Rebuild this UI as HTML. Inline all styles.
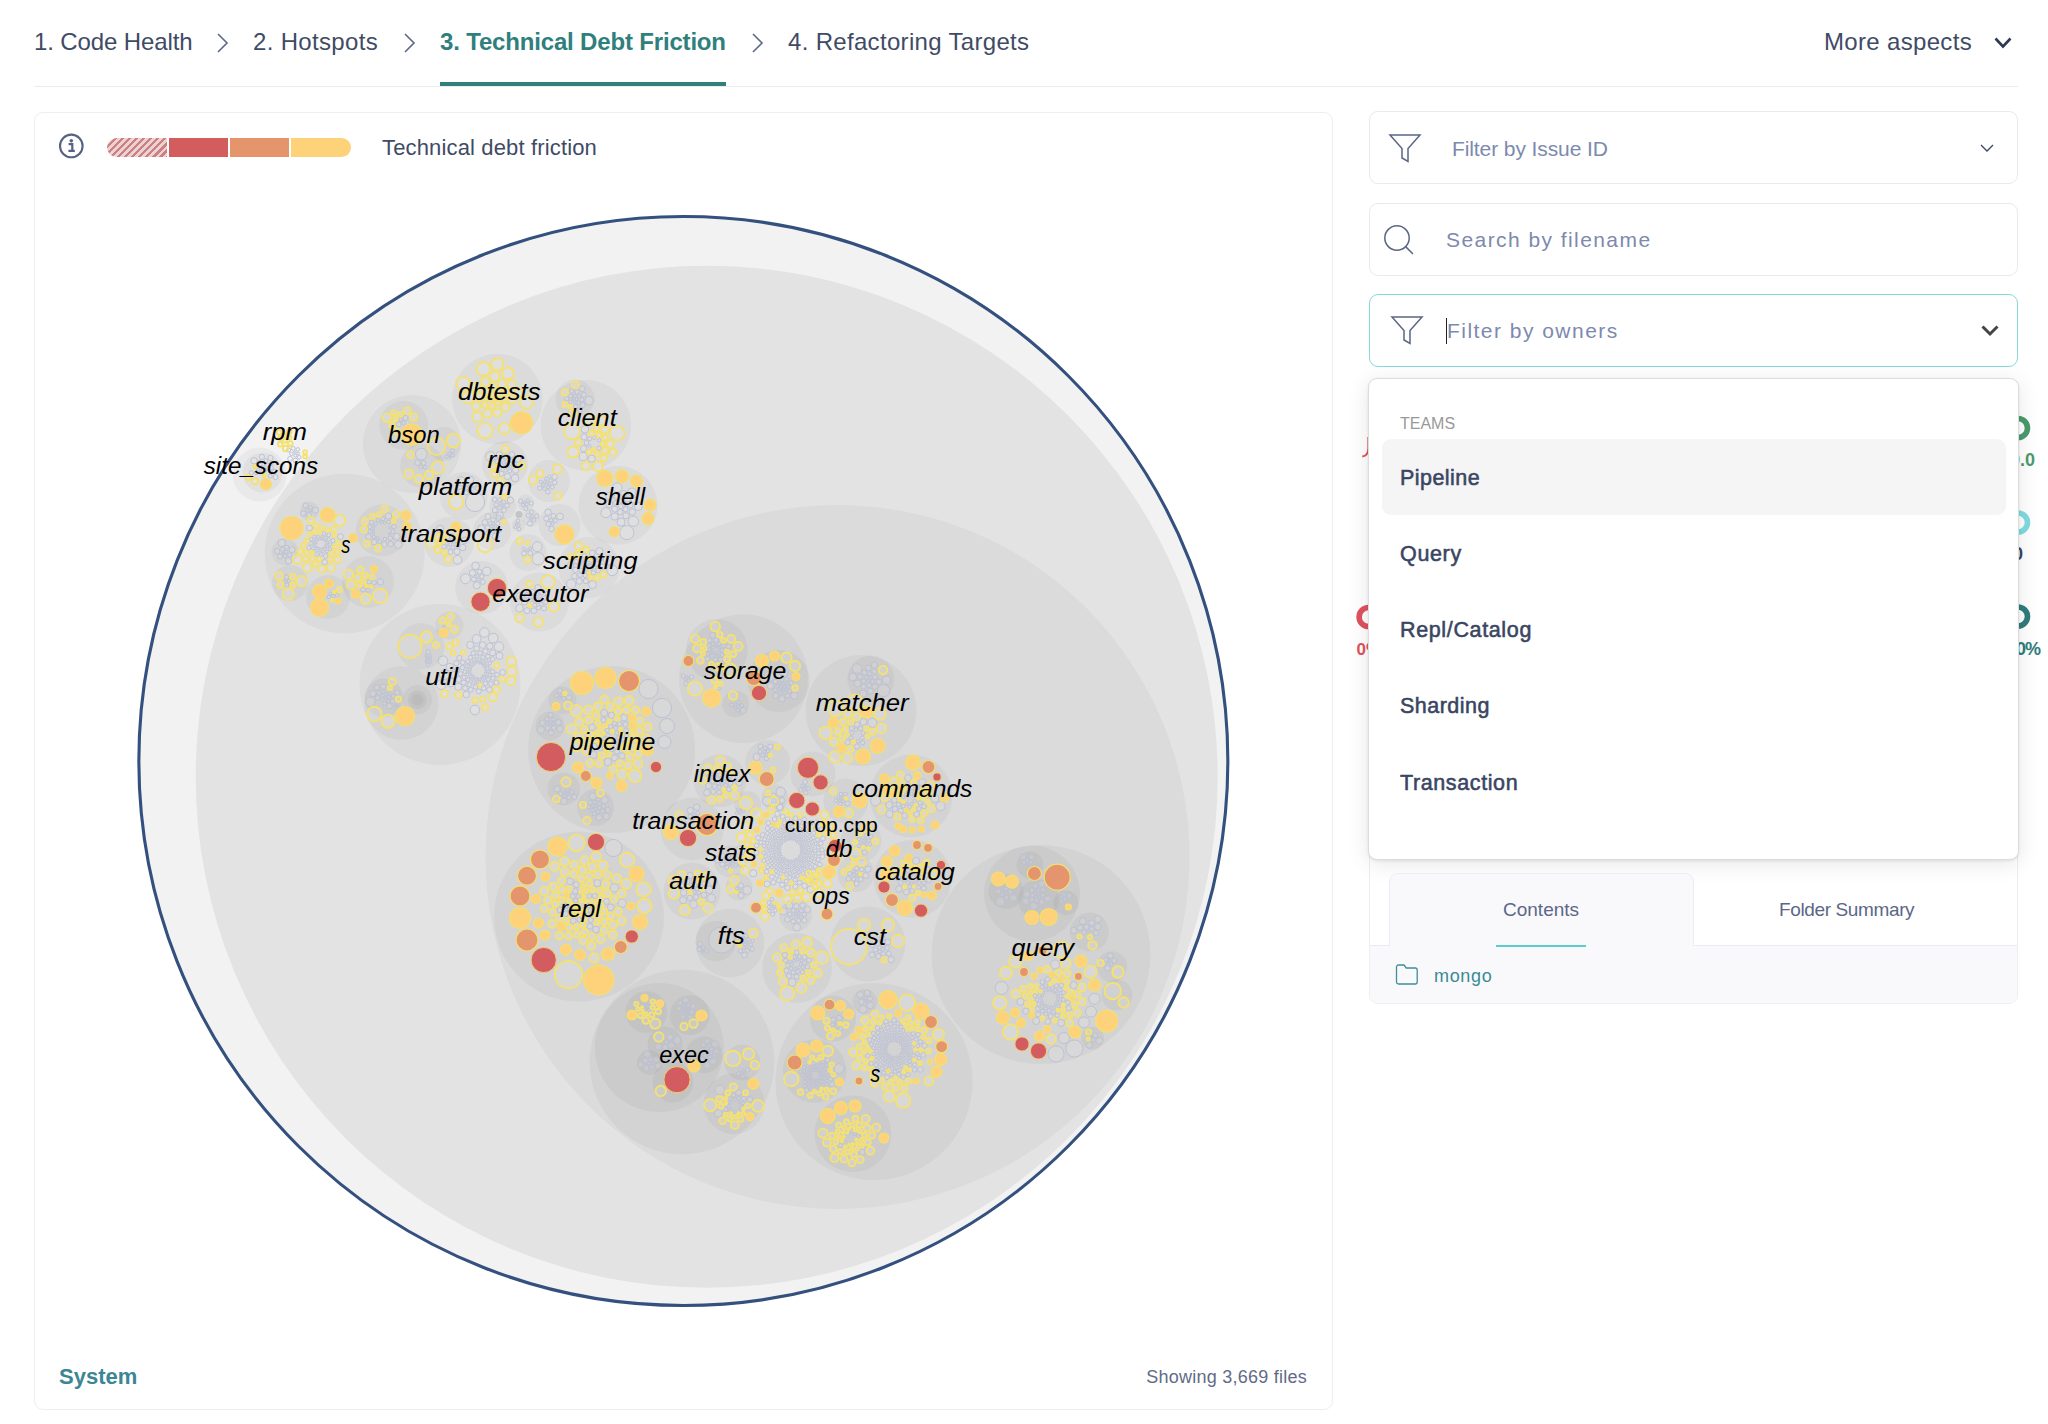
<!DOCTYPE html>
<html lang="en">
<head>
<meta charset="utf-8">
<title>Technical Debt Friction</title>
<style>
*{box-sizing:border-box;margin:0;padding:0}
html,body{width:2048px;height:1424px;overflow:hidden;background:#fff}
body{position:relative;font-family:"Liberation Sans",sans-serif;color:#3d4963}
.abs{position:absolute;white-space:nowrap}
.nav{font-size:24px;line-height:30px;top:27px;color:#3f4b65}
.nav.act{color:#2f807d;font-weight:bold}
.sep{top:31.5px;width:13px;height:22px}
.navline{left:34px;top:86px;width:1984px;height:1px;background:#e9ebf1}
.actline{left:440px;top:82px;width:286px;height:4px;background:#2f807d}
.card{left:34px;top:111.5px;width:1299px;height:1298.5px;border:1px solid #eceef3;border-radius:9px;background:#fff}
.viz{position:absolute;left:34px;top:112px}
.legend{left:107px;top:137.8px;width:244px;height:19px;border-radius:10px;overflow:hidden;display:flex}
.legend i{display:block;height:19px;margin-right:2px}
.box{left:1369px;width:649px;height:72px;border:1px solid #e8eaf1;border-radius:9px;background:#fff}
.ph{font-size:21px;line-height:26px;color:#7d89ad}
.dd{left:1368.4px;top:378px;width:650.6px;height:482px;background:#fff;border:1px solid #dcdcdc;border-radius:9px;box-shadow:0 4px 22px rgba(0,0,0,.10),0 1px 3px rgba(0,0,0,.08)}
.opt{left:1400px;font-size:21.5px;line-height:26px;font-weight:normal;-webkit-text-stroke:.55px #3a4562;color:#3a4562}
.panel{left:1369px;top:600px;width:649px;height:404px;border:1px solid #eceef3;border-radius:9px;background:#fff;overflow:hidden}
.tab{font-size:19px;line-height:24px;color:#5b6787}
</style>
</head>
<body>
<!-- top navigation -->
<div class="abs nav" id="n1" style="left:34px;letter-spacing:-0.12px">1. Code Health</div>
<svg class="abs sep" style="left:216px" viewBox="0 0 13 22"><path d="M2 2 L11 11 L2 20" fill="none" stroke="#5b6888" stroke-width="1.6"/></svg>
<div class="abs nav" id="n2" style="left:253px;letter-spacing:0.33px">2. Hotspots</div>
<svg class="abs sep" style="left:403px" viewBox="0 0 13 22"><path d="M2 2 L11 11 L2 20" fill="none" stroke="#5b6888" stroke-width="1.6"/></svg>
<div class="abs nav act" id="n3" style="left:440px;letter-spacing:-0.17px">3. Technical Debt Friction</div>
<svg class="abs sep" style="left:751px" viewBox="0 0 13 22"><path d="M2 2 L11 11 L2 20" fill="none" stroke="#5b6888" stroke-width="1.6"/></svg>
<div class="abs nav" id="n4" style="left:788px;letter-spacing:0.32px">4. Refactoring Targets</div>
<div class="abs nav" id="n5" style="left:1824px;letter-spacing:0.33px">More aspects</div>
<svg class="abs" style="left:1993px;top:35.5px;width:20px;height:14px" viewBox="0 0 20 14"><path d="M2.5 2.5 L10 10.5 L17.5 2.5" fill="none" stroke="#2f3a52" stroke-width="2.6"/></svg>
<div class="abs navline"></div>
<div class="abs actline"></div>

<!-- left card -->
<div class="abs card"></div>
<svg class="viz" width="1298" height="1297" viewBox="34 112 1298 1297">
<circle cx="683.35" cy="761" r="544.5" fill="#f2f2f2" stroke="#34507e" stroke-width="3.1"/>
<circle cx="706.7" cy="776.8" r="511" fill="#e3e3e3"/>
<g fill="#000" fill-opacity=".034">
<circle cx="837.5" cy="857" r="352"/>
<circle cx="344.7" cy="553.4" r="80"/>
<circle cx="309.3" cy="511" r="9.5"/>
<circle cx="285" cy="551.7" r="13.5"/>
<circle cx="381.8" cy="530.6" r="26"/>
<circle cx="290" cy="583" r="18"/>
<circle cx="328" cy="597" r="22"/>
<circle cx="368" cy="582" r="26"/>
<circle cx="259.6" cy="474.6" r="27"/>
<circle cx="262.5" cy="472.5" r="20"/>
<circle cx="412" cy="444" r="49"/>
<circle cx="403.7" cy="425.3" r="24.5"/>
<circle cx="444" cy="444" r="17"/>
<circle cx="422" cy="465.7" r="22"/>
<circle cx="497.4" cy="399" r="45.3"/>
<circle cx="585.8" cy="425.3" r="45.3"/>
<circle cx="575" cy="399" r="19.5"/>
<circle cx="618" cy="505.3" r="39.5"/>
<circle cx="504.8" cy="464.3" r="23"/>
<circle cx="549" cy="481" r="21"/>
<circle cx="463.7" cy="496" r="24"/>
<circle cx="502.7" cy="506.4" r="13.5"/>
<circle cx="525.8" cy="503" r="8.5"/>
<circle cx="531" cy="518" r="9"/>
<circle cx="518.5" cy="525" r="7"/>
<circle cx="559.5" cy="525" r="21"/>
<circle cx="528" cy="552.7" r="18.5"/>
<circle cx="449" cy="542" r="25"/>
<circle cx="492" cy="531" r="19"/>
<circle cx="589" cy="567.5" r="30.5"/>
<circle cx="481.6" cy="587.5" r="26.5"/>
<circle cx="539.5" cy="602" r="29.5"/>
<circle cx="440" cy="684.5" r="80.5"/>
<circle cx="421" cy="646.4" r="23.5"/>
<circle cx="449.4" cy="625.5" r="14"/>
<circle cx="401.5" cy="703" r="37"/>
<circle cx="384" cy="698" r="19.5"/>
<circle cx="417.4" cy="699.7" r="14.7"/>
<circle cx="417.4" cy="699.7" r="9.5"/>
<circle cx="417.4" cy="699.7" r="6"/>
<circle cx="611.6" cy="749.6" r="83.5"/>
<circle cx="562.5" cy="700.5" r="14"/>
<circle cx="550" cy="726" r="14.5"/>
<circle cx="563.7" cy="789" r="16.5"/>
<circle cx="595.6" cy="807.4" r="18.5"/>
<circle cx="743.5" cy="678.7" r="64.5"/>
<circle cx="716.8" cy="650" r="31"/>
<circle cx="778.8" cy="681" r="31"/>
<circle cx="735.7" cy="704" r="13.5"/>
<circle cx="861" cy="710.6" r="55.5"/>
<circle cx="870.8" cy="679" r="23.5"/>
<circle cx="720" cy="780.7" r="26.5"/>
<circle cx="767.6" cy="762.6" r="22.5"/>
<circle cx="813" cy="774" r="22.5"/>
<circle cx="775" cy="798" r="13.5"/>
<circle cx="747.8" cy="804.8" r="13.5"/>
<circle cx="846" cy="801" r="22.5"/>
<circle cx="911" cy="796" r="41.5"/>
<circle cx="692" cy="829" r="31.5"/>
<circle cx="730" cy="861.5" r="16"/>
<circle cx="692" cy="891" r="28.5"/>
<circle cx="739" cy="887" r="13.5"/>
<circle cx="729.8" cy="943" r="34.4"/>
<circle cx="716.1" cy="941.1" r="20.3"/>
<circle cx="795.6" cy="915" r="16.5"/>
<circle cx="861" cy="841" r="20.5"/>
<circle cx="855.8" cy="873.6" r="18.5"/>
<circle cx="912.6" cy="878.8" r="39"/>
<circle cx="868" cy="944" r="37.5"/>
<circle cx="797" cy="968" r="35"/>
<circle cx="579" cy="916.6" r="85"/>
<circle cx="682" cy="1062" r="92.4"/>
<circle cx="659.3" cy="1047.6" r="64.5"/>
<circle cx="646.4" cy="1012" r="21"/>
<circle cx="689.8" cy="1015" r="20"/>
<circle cx="704" cy="1055" r="18.5"/>
<circle cx="665" cy="1044" r="17.5"/>
<circle cx="649.5" cy="1062.5" r="12.5"/>
<circle cx="673" cy="1082" r="20.5"/>
<circle cx="742.4" cy="1062.5" r="18"/>
<circle cx="734" cy="1103.8" r="30.5"/>
<circle cx="874" cy="1081.6" r="98.6"/>
<circle cx="833" cy="1018.6" r="23.2"/>
<circle cx="865" cy="1001.6" r="12.5"/>
<circle cx="814.7" cy="1071" r="31.8"/>
<circle cx="852.9" cy="1133.8" r="38.5"/>
<circle cx="1041" cy="954.6" r="109.5"/>
<circle cx="1032" cy="893.5" r="48"/>
<circle cx="1030" cy="865" r="13.5"/>
<circle cx="1006" cy="891.5" r="17.5"/>
<circle cx="1038.5" cy="899.6" r="20.5"/>
<circle cx="1066" cy="902.7" r="12.5"/>
<circle cx="1089.4" cy="932" r="19.5"/>
<circle cx="1111.8" cy="966.8" r="15.5"/>
<circle cx="1117" cy="995" r="15.5"/>
<circle cx="1092.5" cy="1038" r="11.5"/>
</g>
<g fill="#fff" fill-opacity=".13" stroke="#bac0d3" stroke-width=".95"><circle cx="321" cy="548.4" r="0.5"/><circle cx="317.1" cy="541.5" r="0.5"/><circle cx="320.7" cy="539.4" r="0.5"/><circle cx="324.7" cy="546.3" r="0.5"/><circle cx="316.3" cy="543.3" r="0.6"/><circle cx="325.5" cy="544.4" r="0.6"/><circle cx="319" cy="548.1" r="0.7"/><circle cx="322.9" cy="539.6" r="0.8"/><circle cx="323.2" cy="548.2" r="0.8"/><circle cx="318.6" cy="539.6" r="0.8"/><circle cx="325.7" cy="548.4" r="0.9"/><circle cx="316" cy="539.4" r="0.9"/><circle cx="325.3" cy="540.9" r="1"/><circle cx="327.6" cy="542.8" r="1.1"/><circle cx="316.5" cy="547.1" r="1.1"/><circle cx="314.2" cy="544.9" r="1.1"/><circle cx="314.1" cy="541.7" r="1.2"/><circle cx="319.8" cy="550.8" r="1.2"/><circle cx="327.7" cy="546.1" r="1.2"/><circle cx="321.8" cy="536.9" r="1.3"/><circle cx="323.2" cy="551.2" r="1.3"/><circle cx="318.2" cy="536.6" r="1.4"/><circle cx="316.3" cy="550.5" r="1.4"/><circle cx="325.4" cy="537.6" r="1.4"/><circle cx="330.7" cy="544.2" r="1.4"/><circle cx="314.5" cy="536.5" r="1.5"/><circle cx="327" cy="551.4" r="1.5"/><circle cx="328.8" cy="539.4" r="1.6"/><circle cx="313.1" cy="548.4" r="1.6"/><circle cx="330.1" cy="548.9" r="1.6"/><circle cx="311.3" cy="539.1" r="1.7"/><circle cx="310.7" cy="543.5" r="1.7"/><circle cx="321" cy="554.4" r="1.7"/><circle cx="324.1" cy="533.6" r="1.8"/><circle cx="316.6" cy="554.6" r="1.8"/><circle cx="308.7" cy="547.6" r="2"/><circle cx="333" cy="540.6" r="2"/><circle cx="328.8" cy="534.9" r="2"/><circle cx="325.7" cy="556" r="2.3"/><circle cx="324.7" cy="562.2" r="2.7"/><circle cx="340.5" cy="536.7" r="2.9"/><circle cx="309.5" cy="528" r="3"/><circle cx="310.7" cy="511" r="0.9"/><circle cx="307.3" cy="510.3" r="1.6"/><circle cx="310.5" cy="507.4" r="1.8"/><circle cx="309.1" cy="515.1" r="2.5"/><circle cx="305.6" cy="505.5" r="2.6"/><circle cx="303.2" cy="513.5" r="2.7"/><circle cx="315.5" cy="510.2" r="3"/><circle cx="282.9" cy="553.2" r="1"/><circle cx="286.3" cy="551.9" r="1.7"/><circle cx="285.2" cy="556.1" r="1.8"/><circle cx="282.3" cy="549.4" r="2"/><circle cx="289.7" cy="554.9" r="2"/><circle cx="286.7" cy="547.2" r="2"/><circle cx="280" cy="556.5" r="2.5"/><circle cx="277.1" cy="551.2" r="2.7"/><circle cx="292.1" cy="549.6" r="3"/><circle cx="288.5" cy="560.9" r="3.2"/><circle cx="281.7" cy="542.9" r="3.7"/><circle cx="373.4" cy="529.9" r="1.2"/><circle cx="389.4" cy="533.9" r="1.2"/><circle cx="373.4" cy="533.1" r="1.2"/><circle cx="373.8" cy="526.7" r="1.2"/><circle cx="389.8" cy="527.7" r="1.2"/><circle cx="381" cy="522.5" r="1.3"/><circle cx="384.6" cy="522.8" r="1.4"/><circle cx="377.6" cy="537.9" r="1.4"/><circle cx="375.8" cy="523.6" r="1.6"/><circle cx="373.8" cy="536.8" r="1.7"/><circle cx="378" cy="520" r="1.7"/><circle cx="388.7" cy="522" r="1.8"/><circle cx="384.9" cy="539.2" r="1.8"/><circle cx="369.9" cy="531.5" r="1.8"/><circle cx="369.8" cy="526.8" r="1.9"/><circle cx="379.6" cy="541.7" r="1.9"/><circle cx="383" cy="518.8" r="2"/><circle cx="371.4" cy="522.2" r="2"/><circle cx="392.8" cy="531.6" r="2"/><circle cx="394" cy="526.6" r="2.2"/><circle cx="390.3" cy="538.2" r="2.3"/><circle cx="384.4" cy="544.5" r="2.7"/><circle cx="390.7" cy="544.1" r="2.7"/><circle cx="368.4" cy="536.8" r="2.8"/><circle cx="374" cy="542.2" r="2.8"/><circle cx="388.5" cy="516.1" r="3.2"/><circle cx="396.7" cy="536.6" r="3.4"/><circle cx="398.2" cy="544.6" r="3.9"/><circle cx="285.1" cy="581.3" r="1.3"/><circle cx="288.9" cy="581" r="1.6"/><circle cx="286.9" cy="585.1" r="2"/><circle cx="286.4" cy="577.1" r="2.2"/><circle cx="330.5" cy="593.4" r="1.3"/><circle cx="333" cy="596.1" r="1.6"/><circle cx="329" cy="597" r="1.7"/><circle cx="337.2" cy="595.3" r="1.8"/><circle cx="368.1" cy="590.2" r="2"/><circle cx="369" cy="581.9" r="2.1"/><circle cx="374.1" cy="582.6" r="2.2"/><circle cx="363" cy="589.6" r="2.3"/><circle cx="380.4" cy="581.8" r="3.2"/><circle cx="265.3" cy="470.9" r="1.1"/><circle cx="262.2" cy="470.3" r="1.2"/><circle cx="264.4" cy="467.9" r="1.2"/><circle cx="261.1" cy="467.2" r="1.2"/><circle cx="260" cy="472.8" r="1.3"/><circle cx="267.7" cy="468.7" r="1.3"/><circle cx="258.3" cy="469.6" r="1.5"/><circle cx="270" cy="471.7" r="1.6"/><circle cx="263.4" cy="464.3" r="1.6"/><circle cx="267.5" cy="464.8" r="1.7"/><circle cx="256.1" cy="473" r="1.8"/><circle cx="259.9" cy="461.8" r="1.8"/><circle cx="271.6" cy="467.7" r="1.8"/><circle cx="270.3" cy="476.1" r="1.9"/><circle cx="271.6" cy="463.2" r="1.9"/><circle cx="265.9" cy="460.7" r="1.9"/><circle cx="251.3" cy="472.8" r="2.1"/><circle cx="274.6" cy="471.5" r="2.2"/><circle cx="275.5" cy="477.1" r="2.5"/><circle cx="261.9" cy="456.9" r="2.6"/><circle cx="270.5" cy="457.9" r="2.6"/><circle cx="254.1" cy="460.8" r="3.2"/><circle cx="294.9" cy="452.1" r="1.2"/><circle cx="298.1" cy="453.4" r="1.3"/><circle cx="295.3" cy="455.7" r="1.5"/><circle cx="297.8" cy="449.4" r="1.8"/><circle cx="299.2" cy="457.2" r="1.8"/><circle cx="291.4" cy="453.9" r="1.8"/><circle cx="293.2" cy="448.4" r="2"/><circle cx="288.5" cy="450" r="2.1"/><circle cx="295.4" cy="460.4" r="2.3"/><circle cx="290.1" cy="458.8" r="2.4"/><circle cx="400.6" cy="419.6" r="1.7"/><circle cx="403.5" cy="422.8" r="1.7"/><circle cx="398.7" cy="424.3" r="2.5"/><circle cx="405.5" cy="418" r="2.6"/><circle cx="449.9" cy="457" r="0.9"/><circle cx="449.2" cy="453.7" r="1.5"/><circle cx="452.8" cy="455.2" r="1.6"/><circle cx="446.5" cy="456.7" r="1.6"/><circle cx="452.4" cy="450.8" r="2"/><circle cx="425.2" cy="467.4" r="1.7"/><circle cx="420.8" cy="467.1" r="1.8"/><circle cx="423.5" cy="462.9" r="2.3"/><circle cx="417.6" cy="462.7" r="2.7"/><circle cx="421.3" cy="454.1" r="5.8"/><circle cx="573.1" cy="399" r="1.2"/><circle cx="576.6" cy="399.3" r="1.4"/><circle cx="574.5" cy="402.3" r="1.4"/><circle cx="574.9" cy="395.9" r="1.5"/><circle cx="578.4" cy="402.8" r="1.7"/><circle cx="579" cy="396.2" r="1.7"/><circle cx="570.4" cy="401.9" r="1.8"/><circle cx="570.6" cy="396" r="1.9"/><circle cx="581.9" cy="399.8" r="2"/><circle cx="566.7" cy="398.8" r="2.1"/><circle cx="575.6" cy="406.5" r="2.1"/><circle cx="577.1" cy="391.8" r="2.2"/><circle cx="571.7" cy="391.1" r="2.3"/><circle cx="582.8" cy="405.1" r="2.4"/><circle cx="583.8" cy="394.7" r="2.5"/><circle cx="579.9" cy="410.1" r="2.6"/><circle cx="582.3" cy="388.7" r="2.9"/><circle cx="589.1" cy="400.7" r="4.3"/><circle cx="589.6" cy="446.6" r="1.6"/><circle cx="594.3" cy="437.8" r="1.7"/><circle cx="599.1" cy="440.3" r="1.7"/><circle cx="589.8" cy="438.7" r="2"/><circle cx="599" cy="448.2" r="2.2"/><circle cx="586.5" cy="442.9" r="2.3"/><circle cx="583.6" cy="448.5" r="3.1"/><circle cx="584" cy="437" r="3.1"/><circle cx="591.7" cy="458.7" r="3.6"/><circle cx="585" cy="429.3" r="3.8"/><circle cx="583.2" cy="456.5" r="4.1"/><circle cx="625.2" cy="504.2" r="1.7"/><circle cx="620.7" cy="506.3" r="2.3"/><circle cx="621.6" cy="500.8" r="2.4"/><circle cx="625.6" cy="509.2" r="2.5"/><circle cx="616.1" cy="502.8" r="2.6"/><circle cx="620.3" cy="512.1" r="2.7"/><circle cx="627.4" cy="499.4" r="2.7"/><circle cx="630.3" cy="505.4" r="2.7"/><circle cx="614.6" cy="509.1" r="3"/><circle cx="633.9" cy="499.9" r="3"/><circle cx="617.1" cy="496.3" r="3.1"/><circle cx="626" cy="515.7" r="3.1"/><circle cx="623.8" cy="493.7" r="3.2"/><circle cx="632.3" cy="512" r="3.2"/><circle cx="609.3" cy="504.1" r="3.4"/><circle cx="614.7" cy="516.5" r="3.6"/><circle cx="609.4" cy="496.1" r="3.8"/><circle cx="621.1" cy="522.1" r="4"/><circle cx="638.4" cy="506.5" r="4"/><circle cx="631.9" cy="492.1" r="4.1"/><circle cx="617.3" cy="487.5" r="4.8"/><circle cx="605.9" cy="512.7" r="5"/><circle cx="633.4" cy="521.3" r="5.2"/><circle cx="626.8" cy="532.6" r="7.1"/><circle cx="506.8" cy="467" r="1.2"/><circle cx="504.9" cy="464.3" r="1.2"/><circle cx="508.2" cy="464" r="1.2"/><circle cx="503.4" cy="467.3" r="1.2"/><circle cx="506.3" cy="461.2" r="1.3"/><circle cx="510.4" cy="466.9" r="1.5"/><circle cx="501.2" cy="464.3" r="1.6"/><circle cx="505.5" cy="470.5" r="1.6"/><circle cx="502.4" cy="460.2" r="1.8"/><circle cx="509.8" cy="471.1" r="1.9"/><circle cx="510.5" cy="460.3" r="2.2"/><circle cx="514.2" cy="464.2" r="2.3"/><circle cx="499.2" cy="468.6" r="2.3"/><circle cx="501.6" cy="473.7" r="2.5"/><circle cx="506" cy="456.5" r="2.5"/><circle cx="497.3" cy="461.3" r="2.5"/><circle cx="511.9" cy="454.5" r="2.9"/><circle cx="515.6" cy="470.3" r="3"/><circle cx="507.4" cy="476.5" r="3.1"/><circle cx="499.4" cy="454.9" r="3.3"/><circle cx="517.8" cy="458.7" r="3.5"/><circle cx="515" cy="478" r="3.8"/><circle cx="490.5" cy="456.6" r="4.9"/><circle cx="547.4" cy="481.6" r="1"/><circle cx="546.3" cy="484.4" r="1.1"/><circle cx="544.4" cy="481.8" r="1.2"/><circle cx="549.6" cy="484" r="1.3"/><circle cx="543" cy="485" r="1.4"/><circle cx="548.1" cy="487.3" r="1.4"/><circle cx="545.9" cy="478.6" r="1.5"/><circle cx="550.7" cy="480.4" r="1.6"/><circle cx="544.4" cy="488.6" r="1.6"/><circle cx="549.4" cy="476.5" r="1.6"/><circle cx="540.7" cy="481.8" r="1.6"/><circle cx="552.4" cy="487.1" r="2"/><circle cx="554.7" cy="482.6" r="2.2"/><circle cx="539.7" cy="488.2" r="2.2"/><circle cx="547.9" cy="491.8" r="2.2"/><circle cx="554.6" cy="476.8" r="2.8"/><circle cx="468.9" cy="489.7" r="1.1"/><circle cx="472.4" cy="489.1" r="1.6"/><circle cx="469.7" cy="486" r="1.7"/><circle cx="474.1" cy="485" r="2"/><circle cx="466.2" cy="492.7" r="2.1"/><circle cx="465.2" cy="487.7" r="2.2"/><circle cx="478" cy="488.4" r="2.3"/><circle cx="460.8" cy="491.3" r="2.7"/><circle cx="470.1" cy="479.8" r="3.7"/><circle cx="461" cy="481.3" r="4.6"/><circle cx="502.9" cy="505.8" r="1.1"/><circle cx="500.2" cy="503.8" r="1.3"/><circle cx="503.8" cy="502.1" r="1.8"/><circle cx="499.7" cy="507.8" r="1.8"/><circle cx="499.8" cy="499.7" r="2"/><circle cx="496.1" cy="504.7" r="2.1"/><circle cx="507.1" cy="505.7" r="2.3"/><circle cx="504.1" cy="510.2" r="2.3"/><circle cx="494.6" cy="499.5" r="2.4"/><circle cx="494.9" cy="510.1" r="2.6"/><circle cx="510.3" cy="500.2" r="3.2"/><circle cx="499.7" cy="515.4" r="3.6"/><circle cx="524.6" cy="501.9" r="1"/><circle cx="526.9" cy="504.3" r="1.5"/><circle cx="523" cy="505" r="1.6"/><circle cx="527.8" cy="500.4" r="1.6"/><circle cx="525.8" cy="508.6" r="2"/><circle cx="531.3" cy="503.4" r="2.1"/><circle cx="520.6" cy="501.1" r="2.1"/><circle cx="530.3" cy="519" r="1.1"/><circle cx="532.4" cy="516.3" r="1.4"/><circle cx="534" cy="520.1" r="1.8"/><circle cx="528.2" cy="515.5" r="2"/><circle cx="536.8" cy="516.1" r="2.1"/><circle cx="531.8" cy="512" r="2.1"/><circle cx="529.9" cy="523.5" r="2.6"/><circle cx="515.8" cy="523.7" r="0.9"/><circle cx="518.8" cy="525" r="1.4"/><circle cx="515.4" cy="527" r="1.5"/><circle cx="518" cy="520.8" r="1.8"/><circle cx="519.1" cy="529.1" r="1.8"/><circle cx="552.7" cy="523.6" r="1.3"/><circle cx="551.1" cy="520.2" r="1.6"/><circle cx="555.5" cy="520.6" r="1.9"/><circle cx="548.2" cy="524.1" r="2.4"/><circle cx="553.3" cy="515.9" r="2.4"/><circle cx="546.3" cy="518.6" r="2.6"/><circle cx="551.6" cy="529" r="2.7"/><circle cx="548.1" cy="512.2" r="3.2"/><circle cx="560" cy="516.4" r="3.4"/><circle cx="526.9" cy="550.2" r="1.3"/><circle cx="530.2" cy="548.4" r="1.5"/><circle cx="523.5" cy="548.7" r="1.5"/><circle cx="530.3" cy="553.2" r="2.4"/><circle cx="523.9" cy="553.5" r="2.4"/><circle cx="537.3" cy="546.7" r="4.9"/><circle cx="538.2" cy="558.7" r="6.2"/><circle cx="447" cy="543.8" r="1.3"/><circle cx="450.5" cy="544.1" r="1.4"/><circle cx="448.4" cy="547.5" r="1.7"/><circle cx="448.9" cy="540.4" r="1.7"/><circle cx="452.9" cy="547.4" r="1.8"/><circle cx="453.4" cy="541.1" r="1.9"/><circle cx="443.8" cy="546.7" r="2.1"/><circle cx="457.1" cy="544.6" r="2.3"/><circle cx="450.5" cy="552.1" r="2.5"/><circle cx="451.6" cy="536.1" r="2.5"/><circle cx="457" cy="551.6" r="3.1"/><circle cx="462.8" cy="547.5" r="3.2"/><circle cx="464.6" cy="540.4" r="3.2"/><circle cx="440" cy="528.9" r="3.7"/><circle cx="457.5" cy="559.9" r="4.4"/><circle cx="491.9" cy="526.6" r="1.2"/><circle cx="493.7" cy="523.9" r="1.2"/><circle cx="495.2" cy="526.9" r="1.3"/><circle cx="490" cy="523.4" r="1.6"/><circle cx="493" cy="530.6" r="2.1"/><circle cx="497.9" cy="523.5" r="2.1"/><circle cx="487.7" cy="527.5" r="2.2"/><circle cx="493" cy="519.7" r="2.2"/><circle cx="488.1" cy="533" r="2.5"/><circle cx="498.4" cy="518" r="2.5"/><circle cx="498.6" cy="530.3" r="2.6"/><circle cx="484.9" cy="522.3" r="2.7"/><circle cx="487.9" cy="516.5" r="2.9"/><circle cx="495.6" cy="536.4" r="3.3"/><circle cx="481.3" cy="528.3" r="3.4"/><circle cx="586.6" cy="565" r="1.3"/><circle cx="587.6" cy="568.4" r="1.3"/><circle cx="584.2" cy="567.6" r="1.3"/><circle cx="590" cy="565.9" r="1.3"/><circle cx="589.1" cy="562.5" r="1.3"/><circle cx="591" cy="569.3" r="1.3"/><circle cx="585.1" cy="571.1" r="1.4"/><circle cx="583.1" cy="564" r="1.5"/><circle cx="585.6" cy="560.9" r="1.6"/><circle cx="593" cy="563.3" r="1.7"/><circle cx="594.5" cy="567.3" r="1.7"/><circle cx="580.9" cy="570.2" r="2"/><circle cx="579" cy="565.7" r="2"/><circle cx="593.5" cy="572.9" r="2.1"/><circle cx="585.2" cy="575.5" r="2.1"/><circle cx="581.1" cy="559.9" r="2.2"/><circle cx="594.4" cy="558.7" r="2.2"/><circle cx="580.1" cy="575.1" r="2.2"/><circle cx="598.2" cy="570.5" r="2.2"/><circle cx="576.1" cy="561.6" r="2.2"/><circle cx="597.8" cy="563.7" r="2.3"/><circle cx="584.6" cy="555.8" r="2.3"/><circle cx="585.9" cy="581.1" r="2.6"/><circle cx="575.4" cy="569.9" r="2.7"/><circle cx="600.1" cy="558.4" r="2.7"/><circle cx="574.3" cy="576.2" r="2.8"/><circle cx="603" cy="566.9" r="3"/><circle cx="592.2" cy="553" r="3"/><circle cx="579.3" cy="581.2" r="3.1"/><circle cx="570.7" cy="565" r="3.3"/><circle cx="599.5" cy="551.2" r="3.6"/><circle cx="592.5" cy="584.6" r="4"/><circle cx="608.2" cy="560.1" r="4.7"/><circle cx="571.1" cy="584" r="4.7"/><circle cx="612.2" cy="570.3" r="5.4"/><circle cx="478.6" cy="579.8" r="1.5"/><circle cx="477.3" cy="576" r="1.6"/><circle cx="481.9" cy="576.6" r="2.2"/><circle cx="473.8" cy="579.4" r="2.4"/><circle cx="479.4" cy="571.7" r="2.4"/><circle cx="482.9" cy="582" r="2.4"/><circle cx="472.5" cy="573" r="3.2"/><circle cx="476.8" cy="585.4" r="3.5"/><circle cx="475.5" cy="565.8" r="3.8"/><circle cx="486.8" cy="571.3" r="4.1"/><circle cx="465.5" cy="578.8" r="5"/><circle cx="537.8" cy="602.2" r="1.3"/><circle cx="537.3" cy="598.8" r="1.3"/><circle cx="540.6" cy="600.1" r="1.3"/><circle cx="534.4" cy="600.9" r="1.4"/><circle cx="540.1" cy="596.5" r="1.4"/><circle cx="541.3" cy="604" r="1.8"/><circle cx="533.7" cy="596.8" r="1.9"/><circle cx="534.8" cy="605.1" r="1.9"/><circle cx="537.1" cy="593.6" r="1.9"/><circle cx="538.7" cy="607.8" r="2"/><circle cx="544.2" cy="598" r="2"/><circle cx="545.8" cy="602.6" r="2"/><circle cx="530.2" cy="600.1" r="2"/><circle cx="542" cy="592.4" r="2.2"/><circle cx="547.4" cy="593.7" r="2.4"/><circle cx="532.1" cy="591.8" r="2.5"/><circle cx="544.1" cy="608.4" r="2.5"/><circle cx="527" cy="595.4" r="2.8"/><circle cx="533.8" cy="610.7" r="2.9"/><circle cx="527" cy="610.6" r="3"/><circle cx="537.9" cy="587.7" r="3.1"/><circle cx="524.5" cy="602" r="3.1"/><circle cx="519.8" cy="596.1" r="3.4"/><circle cx="519.5" cy="608.2" r="3.9"/><circle cx="428.3" cy="657.5" r="0.7"/><circle cx="428.3" cy="659.9" r="0.7"/><circle cx="426.2" cy="658.7" r="0.7"/><circle cx="430.6" cy="658.7" r="0.9"/><circle cx="426.1" cy="661.4" r="1.1"/><circle cx="426" cy="655.8" r="1.2"/><circle cx="430.5" cy="655.6" r="1.2"/><circle cx="430.5" cy="661.8" r="1.3"/><circle cx="427.9" cy="664.5" r="1.7"/><circle cx="428.1" cy="652" r="2.2"/><circle cx="444.1" cy="626" r="1.3"/><circle cx="477.1" cy="677.7" r="0.5"/><circle cx="470.9" cy="670.5" r="0.5"/><circle cx="483.3" cy="666.1" r="0.5"/><circle cx="472.7" cy="675.3" r="0.6"/><circle cx="471.1" cy="673.7" r="0.7"/><circle cx="482.1" cy="664.2" r="0.8"/><circle cx="484.9" cy="667.5" r="0.8"/><circle cx="474" cy="677.1" r="0.8"/><circle cx="472.9" cy="665.6" r="0.8"/><circle cx="483.2" cy="675.7" r="0.9"/><circle cx="481.4" cy="677.8" r="0.9"/><circle cx="474.6" cy="663.5" r="1"/><circle cx="485.8" cy="670" r="1"/><circle cx="469.1" cy="672" r="1"/><circle cx="479.8" cy="663" r="1"/><circle cx="475.5" cy="679.4" r="1"/><circle cx="470.6" cy="668.1" r="1"/><circle cx="477" cy="661.9" r="1.1"/><circle cx="485.5" cy="673" r="1.1"/><circle cx="478.9" cy="679.4" r="1.1"/><circle cx="470.1" cy="665.1" r="1.1"/><circle cx="486.2" cy="676.1" r="1.2"/><circle cx="488.3" cy="671.7" r="1.2"/><circle cx="484.9" cy="664.1" r="1.2"/><circle cx="487.5" cy="666.1" r="1.2"/><circle cx="470.4" cy="676.5" r="1.2"/><circle cx="472.1" cy="679.3" r="1.2"/><circle cx="467.7" cy="669.3" r="1.2"/><circle cx="471.7" cy="662.3" r="1.2"/><circle cx="484.3" cy="678.8" r="1.2"/><circle cx="489.7" cy="668.6" r="1.3"/><circle cx="482.5" cy="661.3" r="1.3"/><circle cx="477.2" cy="682.2" r="1.3"/><circle cx="467.4" cy="674.7" r="1.4"/><circle cx="479.4" cy="659.5" r="1.4"/><circle cx="481.7" cy="681.4" r="1.4"/><circle cx="474.3" cy="659.7" r="1.5"/><circle cx="473.5" cy="682.7" r="1.5"/><circle cx="486.2" cy="660.7" r="1.5"/><circle cx="466.6" cy="665.8" r="1.6"/><circle cx="489.7" cy="675.1" r="1.6"/><circle cx="464.8" cy="671.8" r="1.7"/><circle cx="476.8" cy="656.4" r="1.7"/><circle cx="489.7" cy="663" r="1.7"/><circle cx="467.8" cy="661.6" r="1.9"/><circle cx="488.3" cy="679.4" r="1.9"/><circle cx="468.1" cy="679.8" r="1.9"/><circle cx="464" cy="677.3" r="2"/><circle cx="482.9" cy="657.2" r="2"/><circle cx="485.6" cy="683.5" r="2.1"/><circle cx="470.4" cy="657.5" r="2.1"/><circle cx="493" cy="678.2" r="2.1"/><circle cx="492.7" cy="671.7" r="2.1"/><circle cx="462.4" cy="667.7" r="2.1"/><circle cx="487.9" cy="656.5" r="2.1"/><circle cx="469.3" cy="684.6" r="2.1"/><circle cx="475.4" cy="686.9" r="2.2"/><circle cx="460.4" cy="673.8" r="2.2"/><circle cx="480.1" cy="653" r="2.2"/><circle cx="473.2" cy="653.2" r="2.2"/><circle cx="483.7" cy="688.3" r="2.3"/><circle cx="462.8" cy="662.4" r="2.3"/><circle cx="492.6" cy="659" r="2.3"/><circle cx="497" cy="674.8" r="2.3"/><circle cx="490.9" cy="683.9" r="2.3"/><circle cx="463.7" cy="682.6" r="2.4"/><circle cx="470.8" cy="689.8" r="2.4"/><circle cx="457.2" cy="669.3" r="2.5"/><circle cx="465.1" cy="688.2" r="2.5"/><circle cx="496.5" cy="682.5" r="2.5"/><circle cx="459.3" cy="657.9" r="2.5"/><circle cx="478.8" cy="691.3" r="2.5"/><circle cx="485.5" cy="651.3" r="2.6"/><circle cx="476.6" cy="648.4" r="2.7"/><circle cx="456.4" cy="663.3" r="2.7"/><circle cx="489.5" cy="689.7" r="2.8"/><circle cx="458.5" cy="679.4" r="2.9"/><circle cx="502.7" cy="672.4" r="2.9"/><circle cx="492.7" cy="652.8" r="3"/><circle cx="466.3" cy="694.6" r="3.2"/><circle cx="489.9" cy="646.2" r="3.2"/><circle cx="482.6" cy="645.1" r="3.3"/><circle cx="453.2" cy="674.7" r="3.3"/><circle cx="499.5" cy="655.9" r="3.5"/><circle cx="470.2" cy="645" r="3.6"/><circle cx="458.3" cy="686.7" r="3.6"/><circle cx="449.9" cy="667.2" r="3.9"/><circle cx="450.7" cy="682.6" r="4.1"/><circle cx="476.6" cy="638.9" r="4.4"/><circle cx="499" cy="646.7" r="4.8"/><circle cx="493.2" cy="638.1" r="4.8"/><circle cx="442.9" cy="660.7" r="4.8"/><circle cx="484.4" cy="632.5" r="4.8"/><circle cx="444.2" cy="674.8" r="4.8"/><circle cx="441.1" cy="684.8" r="4.8"/><circle cx="474.9" cy="710" r="4.8"/><circle cx="385.5" cy="697.9" r="1.3"/><circle cx="386.3" cy="694.4" r="1.4"/><circle cx="389.1" cy="697" r="1.5"/><circle cx="382.6" cy="695.6" r="1.5"/><circle cx="390" cy="693.2" r="1.6"/><circle cx="383.5" cy="691.7" r="1.6"/><circle cx="388" cy="700.9" r="1.6"/><circle cx="382.2" cy="699.7" r="1.6"/><circle cx="384.4" cy="703.5" r="1.9"/><circle cx="393.3" cy="696.3" r="1.9"/><circle cx="379.1" cy="692.8" r="2.1"/><circle cx="392.6" cy="701.2" r="2.2"/><circle cx="377.6" cy="697.9" r="2.3"/><circle cx="383.2" cy="686.6" r="2.6"/><circle cx="397.4" cy="692.6" r="2.7"/><circle cx="376.9" cy="687.5" r="2.8"/><circle cx="389.4" cy="706.2" r="2.9"/><circle cx="373" cy="693.5" r="3.2"/><circle cx="370.3" cy="701.9" r="4.7"/><circle cx="398" cy="706" r="0.9"/><circle cx="395.6" cy="704.9" r="0.9"/><circle cx="398.2" cy="702.7" r="1.6"/><circle cx="395.5" cy="708.2" r="1.6"/><circle cx="616.8" cy="733" r="2"/><circle cx="618.3" cy="737.7" r="2"/><circle cx="607.8" cy="735.3" r="2"/><circle cx="614" cy="741.7" r="2"/><circle cx="607.2" cy="730.3" r="2"/><circle cx="615.9" cy="728.1" r="2"/><circle cx="618.9" cy="742.6" r="2"/><circle cx="604.5" cy="738.9" r="2"/><circle cx="615.6" cy="746.4" r="2"/><circle cx="610.5" cy="726.6" r="2"/><circle cx="622.8" cy="739.7" r="2"/><circle cx="614.3" cy="723.4" r="2.1"/><circle cx="611.7" cy="749.7" r="2.1"/><circle cx="626.4" cy="736" r="2.2"/><circle cx="619.6" cy="724" r="2.4"/><circle cx="626" cy="730.4" r="2.4"/><circle cx="616.9" cy="751.7" r="2.5"/><circle cx="603.5" cy="720.1" r="2.5"/><circle cx="625.5" cy="724.5" r="2.6"/><circle cx="600.5" cy="748.4" r="2.6"/><circle cx="611.4" cy="715.3" r="3.1"/><circle cx="614.5" cy="757.8" r="3.1"/><circle cx="622" cy="755.9" r="3.2"/><circle cx="592.1" cy="727.4" r="3.3"/><circle cx="624.1" cy="717.7" r="3.4"/><circle cx="593.6" cy="746.8" r="3.6"/><circle cx="604.2" cy="713" r="3.6"/><circle cx="593.6" cy="755" r="3.7"/><circle cx="607.8" cy="761.9" r="3.8"/><circle cx="559.7" cy="698.4" r="1.2"/><circle cx="561" cy="695.5" r="1.2"/><circle cx="563.6" cy="698.4" r="1.9"/><circle cx="556.8" cy="695.4" r="2.1"/><circle cx="559.9" cy="690.6" r="2.6"/><circle cx="569.1" cy="697.6" r="2.8"/><circle cx="550.5" cy="724.9" r="1.2"/><circle cx="550.5" cy="721.6" r="1.3"/><circle cx="553.4" cy="723.3" r="1.3"/><circle cx="547.5" cy="723.4" r="1.3"/><circle cx="553.7" cy="719.3" r="1.8"/><circle cx="547" cy="719.1" r="2.1"/><circle cx="553.8" cy="727.7" r="2.3"/><circle cx="547.4" cy="728" r="2.4"/><circle cx="550.7" cy="715" r="2.5"/><circle cx="550.9" cy="732.8" r="2.7"/><circle cx="558.3" cy="722.3" r="2.8"/><circle cx="542.5" cy="722.8" r="2.8"/><circle cx="560" cy="728.9" r="3.2"/><circle cx="540.8" cy="729.9" r="3.6"/><circle cx="564.7" cy="792.2" r="1.2"/><circle cx="567.9" cy="793.6" r="1.3"/><circle cx="564.9" cy="795.8" r="1.5"/><circle cx="567.7" cy="789.8" r="1.6"/><circle cx="568.9" cy="797.7" r="2.1"/><circle cx="571.8" cy="791.9" r="2.1"/><circle cx="560.8" cy="793.8" r="2.1"/><circle cx="574.3" cy="796.8" r="2.6"/><circle cx="557.1" cy="788.9" r="3.2"/><circle cx="563.9" cy="801.3" r="3.2"/><circle cx="596.6" cy="805.5" r="1.2"/><circle cx="595.7" cy="808.7" r="1.3"/><circle cx="593.1" cy="806.1" r="1.5"/><circle cx="599.5" cy="807.9" r="1.6"/><circle cx="592.1" cy="810.1" r="1.7"/><circle cx="598" cy="811.8" r="1.7"/><circle cx="594.7" cy="802.3" r="1.7"/><circle cx="599.9" cy="803.7" r="1.7"/><circle cx="594.2" cy="813.9" r="1.8"/><circle cx="598.2" cy="799.6" r="1.8"/><circle cx="588.9" cy="807" r="1.9"/><circle cx="602.6" cy="811.2" r="2"/><circle cx="590.1" cy="802.4" r="2"/><circle cx="603.7" cy="806.3" r="2"/><circle cx="607.9" cy="809.9" r="2.5"/><circle cx="599" cy="817.5" r="3.2"/><circle cx="606.3" cy="816.5" r="3.3"/><circle cx="604.8" cy="800" r="3.5"/><circle cx="592.7" cy="796.4" r="3.6"/><circle cx="715.2" cy="653.9" r="1.2"/><circle cx="716" cy="646.1" r="1.2"/><circle cx="718.9" cy="647.8" r="1.2"/><circle cx="712.3" cy="652.1" r="1.2"/><circle cx="712.4" cy="647.4" r="1.2"/><circle cx="718.8" cy="652.6" r="1.3"/><circle cx="717.9" cy="656.1" r="1.3"/><circle cx="709.4" cy="649.7" r="1.6"/><circle cx="713.1" cy="643.7" r="1.6"/><circle cx="722" cy="650.2" r="1.8"/><circle cx="711.9" cy="656.1" r="1.8"/><circle cx="719.3" cy="643.9" r="1.8"/><circle cx="708" cy="653.8" r="1.8"/><circle cx="708.9" cy="645.3" r="1.9"/><circle cx="723.4" cy="645.9" r="1.9"/><circle cx="722.4" cy="654.9" r="2"/><circle cx="715.2" cy="659.6" r="2.2"/><circle cx="716.1" cy="640" r="2.3"/><circle cx="709.7" cy="640.3" r="2.3"/><circle cx="720.6" cy="659.8" r="2.3"/><circle cx="728.6" cy="646.3" r="2.5"/><circle cx="707.5" cy="659" r="2.5"/><circle cx="712.7" cy="635.1" r="2.8"/><circle cx="784.6" cy="686.4" r="1.2"/><circle cx="781.3" cy="686.2" r="1.2"/><circle cx="783.1" cy="683.5" r="1.2"/><circle cx="782.7" cy="689.2" r="1.2"/><circle cx="786" cy="689.4" r="1.2"/><circle cx="779.3" cy="688.9" r="1.3"/><circle cx="779.7" cy="683.1" r="1.4"/><circle cx="786.6" cy="683.6" r="1.4"/><circle cx="788.6" cy="686.9" r="1.5"/><circle cx="777.2" cy="685.9" r="1.5"/><circle cx="784" cy="692.5" r="1.5"/><circle cx="780.1" cy="692.6" r="1.5"/><circle cx="782" cy="679.8" r="1.8"/><circle cx="786.6" cy="679.4" r="1.9"/><circle cx="789.7" cy="691.1" r="2"/><circle cx="775.2" cy="689.8" r="2"/><circle cx="791.1" cy="683.1" r="2.2"/><circle cx="775.4" cy="681.6" r="2.3"/><circle cx="787.5" cy="695.8" r="2.3"/><circle cx="777.9" cy="676.2" r="2.8"/><circle cx="775.7" cy="695.6" r="2.9"/><circle cx="781.9" cy="698.9" r="3.2"/><circle cx="770.5" cy="685.8" r="3.3"/><circle cx="784.5" cy="673.5" r="3.4"/><circle cx="794.4" cy="695.7" r="3.6"/><circle cx="769.1" cy="676.3" r="5.1"/><circle cx="735.6" cy="704.3" r="1.2"/><circle cx="738.3" cy="706.4" r="1.3"/><circle cx="734.9" cy="707.6" r="1.3"/><circle cx="738.9" cy="702.6" r="1.6"/><circle cx="737.8" cy="710.3" r="1.7"/><circle cx="742.1" cy="705.3" r="1.7"/><circle cx="731.6" cy="705" r="1.9"/><circle cx="743.3" cy="710.7" r="3"/><circle cx="719.4" cy="688.5" r="1.4"/><circle cx="685.2" cy="679.7" r="1.2"/><circle cx="687.2" cy="677" r="1.2"/><circle cx="688.6" cy="680.3" r="1.4"/><circle cx="683.1" cy="676" r="2.1"/><circle cx="691.5" cy="676.9" r="2.1"/><circle cx="686" cy="683.9" r="2.1"/><circle cx="870.6" cy="677.8" r="1.4"/><circle cx="868.3" cy="680.8" r="1.4"/><circle cx="866.5" cy="677.2" r="1.7"/><circle cx="872.5" cy="681.6" r="1.9"/><circle cx="869.5" cy="673.6" r="2"/><circle cx="863.8" cy="681.1" r="2.2"/><circle cx="869.1" cy="685.4" r="2.3"/><circle cx="875.2" cy="677.1" r="2.4"/><circle cx="874.4" cy="671.5" r="2.5"/><circle cx="863.6" cy="686.7" r="2.5"/><circle cx="864.2" cy="672.6" r="2.5"/><circle cx="860" cy="676.9" r="2.5"/><circle cx="874.9" cy="686.6" r="2.7"/><circle cx="879" cy="681.8" r="2.8"/><circle cx="868.4" cy="668" r="2.8"/><circle cx="870.3" cy="691.3" r="2.9"/><circle cx="874.4" cy="665.1" r="3"/><circle cx="857.7" cy="683.4" r="3.4"/><circle cx="863.3" cy="693.7" r="3.6"/><circle cx="852.7" cy="677" r="3.9"/><circle cx="886.6" cy="680" r="4.2"/><circle cx="857" cy="668.5" r="4.8"/><circle cx="883.7" cy="690.7" r="6.1"/><circle cx="858" cy="741.3" r="1.8"/><circle cx="851.6" cy="733.2" r="1.8"/><circle cx="856" cy="729.7" r="1.8"/><circle cx="862.5" cy="737.8" r="1.9"/><circle cx="850.9" cy="737.9" r="2"/><circle cx="863.1" cy="733" r="2.1"/><circle cx="860.7" cy="728.6" r="2.1"/><circle cx="862.7" cy="742.8" r="2.1"/><circle cx="851.3" cy="728.2" r="2.2"/><circle cx="856.9" cy="746.5" r="2.6"/><circle cx="856.9" cy="724.4" r="2.7"/><circle cx="847.6" cy="742.4" r="2.7"/><circle cx="863.5" cy="721.9" r="3.5"/><circle cx="872.3" cy="722.9" r="4.5"/><circle cx="721.9" cy="784" r="1.4"/><circle cx="720.9" cy="780.5" r="1.4"/><circle cx="724.5" cy="781.4" r="1.4"/><circle cx="718.2" cy="783.2" r="1.6"/><circle cx="723.6" cy="777.6" r="1.7"/><circle cx="725.8" cy="785.3" r="1.8"/><circle cx="719.4" cy="787.3" r="1.8"/><circle cx="717.1" cy="779" r="1.9"/><circle cx="719.8" cy="775.1" r="1.9"/><circle cx="728" cy="778.9" r="2"/><circle cx="730.4" cy="783.5" r="2.2"/><circle cx="714.6" cy="786.2" r="2.2"/><circle cx="712.6" cy="781.2" r="2.3"/><circle cx="726.7" cy="773.8" r="2.3"/><circle cx="714.6" cy="774.5" r="2.4"/><circle cx="728.9" cy="789.3" r="2.4"/><circle cx="719.2" cy="792.4" r="2.4"/><circle cx="713.4" cy="791.7" r="2.5"/><circle cx="709.3" cy="776.6" r="2.5"/><circle cx="733.5" cy="778.7" r="2.6"/><circle cx="708.5" cy="785.8" r="3"/><circle cx="706.9" cy="792.8" r="3.3"/><circle cx="739.1" cy="782.6" r="3.3"/><circle cx="766.3" cy="754.4" r="1.1"/><circle cx="764.2" cy="751.8" r="1.3"/><circle cx="768" cy="751.2" r="1.6"/><circle cx="762.6" cy="755.4" r="1.7"/><circle cx="765.2" cy="748" r="1.8"/><circle cx="760.1" cy="751.5" r="2"/><circle cx="766.3" cy="758.6" r="2.2"/><circle cx="760.4" cy="746.3" r="2.4"/><circle cx="770.3" cy="746.6" r="2.6"/><circle cx="756.6" cy="757" r="3.6"/><circle cx="805.7" cy="786" r="1"/><circle cx="804.4" cy="788.8" r="1.2"/><circle cx="802.2" cy="785.8" r="1.6"/><circle cx="808.3" cy="788.7" r="1.8"/><circle cx="800.5" cy="790" r="2"/><circle cx="805.8" cy="792.9" r="2.2"/><circle cx="805.1" cy="781.8" r="2.4"/><circle cx="777.3" cy="801.9" r="1.1"/><circle cx="774.5" cy="800.4" r="1.1"/><circle cx="777.3" cy="798.7" r="1.2"/><circle cx="774" cy="804.6" r="2.2"/><circle cx="773.4" cy="795.8" r="2.7"/><circle cx="782.1" cy="800.5" r="2.9"/><circle cx="779.7" cy="806.9" r="3"/><circle cx="767.1" cy="801.1" r="4.6"/><circle cx="780.8" cy="792" r="4.7"/><circle cx="740.8" cy="809.4" r="0.8"/><circle cx="740.1" cy="812.4" r="1.3"/><circle cx="737.7" cy="809.7" r="1.4"/><circle cx="743.4" cy="810.9" r="1.4"/><circle cx="736.6" cy="813.2" r="1.4"/><circle cx="839.8" cy="800.3" r="1.1"/><circle cx="842" cy="797.9" r="1.3"/><circle cx="843" cy="801.2" r="1.4"/><circle cx="838.4" cy="797.2" r="1.4"/><circle cx="841" cy="794" r="1.8"/><circle cx="840.1" cy="804.1" r="1.8"/><circle cx="836" cy="800.5" r="1.8"/><circle cx="845.5" cy="794.1" r="1.8"/><circle cx="847.3" cy="803.4" r="2.5"/><circle cx="911.2" cy="794" r="1.4"/><circle cx="911.9" cy="803.6" r="1.4"/><circle cx="906.8" cy="804" r="1.4"/><circle cx="906" cy="794.4" r="1.4"/><circle cx="914.7" cy="800.9" r="1.6"/><circle cx="903.2" cy="797.1" r="1.6"/><circle cx="914.4" cy="796.2" r="1.7"/><circle cx="908.4" cy="791.1" r="1.7"/><circle cx="909.6" cy="806.8" r="1.7"/><circle cx="914.7" cy="791.8" r="1.8"/><circle cx="903.3" cy="806.1" r="1.8"/><circle cx="911.9" cy="787.9" r="2.1"/><circle cx="919.9" cy="802.7" r="2.1"/><circle cx="898.6" cy="804.4" r="2.2"/><circle cx="907.8" cy="784.6" r="2.3"/><circle cx="918.9" cy="808.7" r="2.3"/><circle cx="924" cy="806.3" r="2.4"/><circle cx="900.8" cy="810.7" r="2.5"/><circle cx="917.4" cy="787.4" r="2.5"/><circle cx="894.9" cy="809" r="2.7"/><circle cx="894.5" cy="800.3" r="2.7"/><circle cx="916.6" cy="814.3" r="2.9"/><circle cx="904.6" cy="815.6" r="2.9"/><circle cx="907.9" cy="778" r="3.4"/><circle cx="889.1" cy="805" r="3.5"/><circle cx="922.3" cy="782.2" r="3.7"/><circle cx="889.5" cy="814" r="3.7"/><circle cx="934.9" cy="798.5" r="4"/><circle cx="940.5" cy="806.2" r="4.7"/><circle cx="875.6" cy="800.9" r="5"/><circle cx="693.5" cy="818.3" r="1.2"/><circle cx="696.6" cy="817" r="1.2"/><circle cx="693.8" cy="814.7" r="1.4"/><circle cx="692.7" cy="821.9" r="1.5"/><circle cx="690" cy="816.3" r="1.9"/><circle cx="697.8" cy="813.1" r="1.9"/><circle cx="688.1" cy="821" r="2.3"/><circle cx="690.4" cy="810.5" r="3.1"/><circle cx="696.8" cy="807.2" r="3.2"/><circle cx="731.6" cy="863.3" r="0.8"/><circle cx="729.4" cy="862" r="0.8"/><circle cx="731.6" cy="860.7" r="0.9"/><circle cx="729.4" cy="864.6" r="0.9"/><circle cx="729.2" cy="859.2" r="1.1"/><circle cx="734.1" cy="862" r="1.1"/><circle cx="726.7" cy="863.2" r="1.2"/><circle cx="732" cy="866.4" r="1.5"/><circle cx="725.6" cy="859.6" r="1.7"/><circle cx="735.9" cy="865.3" r="1.7"/><circle cx="732.4" cy="857.3" r="1.7"/><circle cx="736.6" cy="858.9" r="1.9"/><circle cx="726.8" cy="867.3" r="2"/><circle cx="728" cy="855.1" r="2.3"/><circle cx="722.5" cy="855.7" r="2.3"/><circle cx="722.3" cy="864.5" r="2.5"/><circle cx="717.6" cy="859.8" r="3.2"/><circle cx="741.9" cy="862.9" r="3.8"/><circle cx="692.9" cy="888.5" r="1.6"/><circle cx="696.9" cy="888.9" r="1.6"/><circle cx="694.6" cy="892.2" r="1.6"/><circle cx="695.2" cy="885.2" r="1.6"/><circle cx="691.2" cy="884.9" r="1.6"/><circle cx="699.3" cy="885.5" r="1.6"/><circle cx="698.9" cy="892.7" r="1.8"/><circle cx="693.6" cy="880.7" r="2.4"/><circle cx="696" cy="897.1" r="2.6"/><circle cx="689.8" cy="897.9" r="2.7"/><circle cx="704.7" cy="883.8" r="2.9"/><circle cx="703.9" cy="895" r="2.9"/><circle cx="686.9" cy="881.5" r="3"/><circle cx="690.1" cy="875.3" r="3.1"/><circle cx="683.7" cy="892.7" r="3.2"/><circle cx="683.1" cy="900.2" r="3.5"/><circle cx="680.7" cy="885.6" r="3.6"/><circle cx="709.2" cy="889.7" r="3.7"/><circle cx="693.5" cy="904.4" r="3.9"/><circle cx="713.1" cy="881.8" r="4.2"/><circle cx="711.3" cy="898.3" r="4.2"/><circle cx="736.9" cy="888.4" r="1.4"/><circle cx="740" cy="890.4" r="1.4"/><circle cx="740.9" cy="885.5" r="2.7"/><circle cx="741.1" cy="895.4" r="2.9"/><circle cx="747.2" cy="890.2" r="4.3"/><circle cx="702.9" cy="951" r="1"/><circle cx="703.5" cy="947.4" r="1.7"/><circle cx="706.7" cy="950.7" r="1.9"/><circle cx="699.2" cy="949.4" r="2.2"/><circle cx="700" cy="943.9" r="2.4"/><circle cx="747.6" cy="943" r="1.1"/><circle cx="744.6" cy="944.3" r="1.2"/><circle cx="745" cy="940.9" r="1.3"/><circle cx="747.4" cy="946.3" r="1.3"/><circle cx="741.6" cy="942.2" r="1.5"/><circle cx="744" cy="947.9" r="1.5"/><circle cx="748.5" cy="939.6" r="1.6"/><circle cx="750.9" cy="944.5" r="1.6"/><circle cx="752.6" cy="940.6" r="1.7"/><circle cx="742.2" cy="938.2" r="1.7"/><circle cx="747.6" cy="950.5" r="1.9"/><circle cx="746.1" cy="935.9" r="2"/><circle cx="752.3" cy="949" r="2.2"/><circle cx="740.4" cy="950.8" r="2.2"/><circle cx="737.3" cy="937.2" r="2.4"/><circle cx="744.4" cy="955.1" r="2.8"/><circle cx="790.4" cy="839.8" r="0.5"/><circle cx="800.4" cy="847.1" r="0.5"/><circle cx="780.8" cy="853" r="0.5"/><circle cx="793.3" cy="840.1" r="0.5"/><circle cx="787.9" cy="859.9" r="0.5"/><circle cx="782" cy="855.6" r="0.5"/><circle cx="799.2" cy="844.4" r="0.5"/><circle cx="784.3" cy="857.7" r="0.5"/><circle cx="796.9" cy="842.4" r="0.5"/><circle cx="800.4" cy="853.2" r="0.5"/><circle cx="780.8" cy="846.8" r="0.5"/><circle cx="784.5" cy="841.7" r="0.5"/><circle cx="796.6" cy="858.4" r="0.5"/><circle cx="791.5" cy="860.3" r="0.5"/><circle cx="788.6" cy="839.7" r="0.5"/><circle cx="801.1" cy="848.7" r="0.5"/><circle cx="780.1" cy="851.3" r="0.5"/><circle cx="795.7" cy="841" r="0.5"/><circle cx="785.5" cy="859" r="0.5"/><circle cx="782.5" cy="857.4" r="0.5"/><circle cx="794.9" cy="839.3" r="0.5"/><circle cx="798.8" cy="842.6" r="0.5"/><circle cx="786.3" cy="860.7" r="0.5"/><circle cx="793.3" cy="860.4" r="0.5"/><circle cx="780.5" cy="849.3" r="0.5"/><circle cx="800.8" cy="850.8" r="0.6"/><circle cx="795.1" cy="859.5" r="0.6"/><circle cx="786.7" cy="840.6" r="0.6"/><circle cx="799.3" cy="855.9" r="0.6"/><circle cx="798.5" cy="857.8" r="0.6"/><circle cx="781.9" cy="844.1" r="0.6"/><circle cx="782.6" cy="842.1" r="0.6"/><circle cx="802.2" cy="852.3" r="0.6"/><circle cx="779" cy="847.8" r="0.6"/><circle cx="780" cy="845" r="0.6"/><circle cx="801.2" cy="855" r="0.6"/><circle cx="797" cy="860.3" r="0.6"/><circle cx="784.8" cy="839.7" r="0.6"/><circle cx="797.6" cy="840.5" r="0.6"/><circle cx="783.6" cy="859.6" r="0.7"/><circle cx="780.1" cy="854.9" r="0.7"/><circle cx="792" cy="838.6" r="0.7"/><circle cx="801.1" cy="845.2" r="0.7"/><circle cx="789.6" cy="861" r="0.7"/><circle cx="787" cy="838.4" r="0.7"/><circle cx="802.7" cy="849.9" r="0.7"/><circle cx="778.5" cy="850" r="0.7"/><circle cx="789.7" cy="837.9" r="0.7"/><circle cx="802.4" cy="847.2" r="0.7"/><circle cx="778.8" cy="852.9" r="0.7"/><circle cx="781.4" cy="859.2" r="0.7"/><circle cx="799.8" cy="840.8" r="0.7"/><circle cx="792.2" cy="862.2" r="0.7"/><circle cx="780.1" cy="857.2" r="0.7"/><circle cx="787.7" cy="862.3" r="0.7"/><circle cx="801" cy="842.9" r="0.7"/><circle cx="795" cy="861.7" r="0.7"/><circle cx="790.1" cy="863.3" r="0.8"/><circle cx="799.2" cy="859.9" r="0.8"/><circle cx="782.5" cy="839.9" r="0.8"/><circle cx="800.8" cy="857.6" r="0.8"/><circle cx="777.8" cy="855" r="0.8"/><circle cx="791.4" cy="836.3" r="0.8"/><circle cx="803.4" cy="845" r="0.8"/><circle cx="794" cy="837.3" r="0.8"/><circle cx="780.3" cy="842.4" r="0.8"/><circle cx="776.8" cy="848.4" r="0.8"/><circle cx="796.9" cy="838.2" r="0.9"/><circle cx="784.3" cy="861.9" r="0.9"/><circle cx="803.5" cy="854.3" r="0.9"/><circle cx="777.7" cy="845.8" r="0.9"/><circle cx="804.5" cy="851.6" r="0.9"/><circle cx="784.8" cy="837.3" r="0.9"/><circle cx="803.2" cy="857" r="0.9"/><circle cx="777.8" cy="843.2" r="0.9"/><circle cx="776.6" cy="851.6" r="0.9"/><circle cx="804.6" cy="848.3" r="0.9"/><circle cx="787.9" cy="836.1" r="0.9"/><circle cx="797.4" cy="862.7" r="0.9"/><circle cx="794" cy="864.1" r="0.9"/><circle cx="801.8" cy="860" r="0.9"/><circle cx="788" cy="864.9" r="0.9"/><circle cx="779.9" cy="839.7" r="0.9"/><circle cx="785.3" cy="864.4" r="0.9"/><circle cx="803.6" cy="842.4" r="1"/><circle cx="777.6" cy="857.7" r="1"/><circle cx="796.1" cy="835.6" r="1"/><circle cx="793.4" cy="834.6" r="1"/><circle cx="782" cy="837.3" r="1"/><circle cx="781.6" cy="861.7" r="1"/><circle cx="799.6" cy="838.2" r="1"/><circle cx="775" cy="846.3" r="1"/><circle cx="800.2" cy="862.4" r="1"/><circle cx="806.2" cy="853.8" r="1"/><circle cx="791.5" cy="865.5" r="1"/><circle cx="779" cy="860.2" r="1"/><circle cx="802.3" cy="839.8" r="1"/><circle cx="789.9" cy="834" r="1"/><circle cx="775.2" cy="854.1" r="1"/><circle cx="806.1" cy="845.8" r="1"/><circle cx="774.4" cy="849.8" r="1"/><circle cx="806.8" cy="850.1" r="1"/><circle cx="785.5" cy="834.6" r="1.1"/><circle cx="796.5" cy="865.5" r="1.1"/><circle cx="804.7" cy="859.4" r="1.1"/><circle cx="777.1" cy="840.4" r="1.1"/><circle cx="779" cy="863.2" r="1.1"/><circle cx="779.1" cy="836.9" r="1.1"/><circle cx="802.2" cy="836.8" r="1.1"/><circle cx="806.3" cy="856.8" r="1.1"/><circle cx="774.9" cy="843.3" r="1.1"/><circle cx="803.2" cy="862.6" r="1.1"/><circle cx="782.3" cy="864.6" r="1.1"/><circle cx="799" cy="835.3" r="1.1"/><circle cx="789.3" cy="867.6" r="1.1"/><circle cx="774.7" cy="857.1" r="1.1"/><circle cx="806.5" cy="842.8" r="1.1"/><circle cx="782.4" cy="834.3" r="1.1"/><circle cx="792.1" cy="831.9" r="1.1"/><circle cx="772.7" cy="852.4" r="1.1"/><circle cx="772.3" cy="847.6" r="1.1"/><circle cx="808.9" cy="852.4" r="1.2"/><circle cx="794" cy="867.4" r="1.2"/><circle cx="799.6" cy="865.4" r="1.2"/><circle cx="808.7" cy="847.6" r="1.2"/><circle cx="787.4" cy="832.1" r="1.2"/><circle cx="786.1" cy="867.4" r="1.2"/><circle cx="805.4" cy="839.8" r="1.2"/><circle cx="775.8" cy="860.2" r="1.2"/><circle cx="773.9" cy="840.2" r="1.2"/><circle cx="795.8" cy="832.5" r="1.2"/><circle cx="775.9" cy="837.4" r="1.2"/><circle cx="779.6" cy="866.3" r="1.2"/><circle cx="801.8" cy="833.6" r="1.2"/><circle cx="806.4" cy="862.1" r="1.2"/><circle cx="782.8" cy="867.9" r="1.2"/><circle cx="799" cy="831.7" r="1.3"/><circle cx="772.5" cy="859.6" r="1.3"/><circle cx="779.2" cy="833.7" r="1.3"/><circle cx="775.8" cy="863.6" r="1.3"/><circle cx="771.8" cy="844.3" r="1.3"/><circle cx="805.5" cy="836.4" r="1.3"/><circle cx="791.7" cy="869.8" r="1.3"/><circle cx="809.4" cy="855.8" r="1.3"/><circle cx="771.7" cy="855.6" r="1.3"/><circle cx="803" cy="865.9" r="1.3"/><circle cx="809.5" cy="844.3" r="1.3"/><circle cx="794.3" cy="829.4" r="1.3"/><circle cx="784.1" cy="831.3" r="1.4"/><circle cx="808.5" cy="859.3" r="1.4"/><circle cx="789.7" cy="829.4" r="1.4"/><circle cx="797.2" cy="868.7" r="1.4"/><circle cx="770" cy="850.2" r="1.4"/><circle cx="800.8" cy="868.8" r="1.4"/><circle cx="811.3" cy="849.9" r="1.4"/><circle cx="808.9" cy="840.3" r="1.4"/><circle cx="787.6" cy="870.5" r="1.4"/><circle cx="772.4" cy="837" r="1.4"/><circle cx="779.8" cy="869.9" r="1.4"/><circle cx="770.4" cy="840.9" r="1.4"/><circle cx="812.1" cy="858.3" r="1.4"/><circle cx="775.6" cy="833.9" r="1.4"/><circle cx="769.2" cy="858.2" r="1.4"/><circle cx="776.1" cy="867.2" r="1.4"/><circle cx="812.3" cy="841.8" r="1.5"/><circle cx="790.3" cy="873.2" r="1.5"/><circle cx="783.9" cy="871.3" r="1.5"/><circle cx="794.9" cy="871.7" r="1.5"/><circle cx="780.5" cy="830.2" r="1.5"/><circle cx="805.3" cy="832.7" r="1.5"/><circle cx="806.7" cy="865.7" r="1.5"/><circle cx="768.5" cy="853.7" r="1.5"/><circle cx="812.6" cy="846.3" r="1.5"/><circle cx="786.2" cy="828.2" r="1.5"/><circle cx="772.1" cy="863.2" r="1.5"/><circle cx="812.4" cy="853.5" r="1.5"/><circle cx="768.8" cy="846.6" r="1.5"/><circle cx="809.2" cy="836.4" r="1.5"/><circle cx="797.9" cy="828.1" r="1.5"/><circle cx="792" cy="826.4" r="1.5"/><circle cx="766.3" cy="849.6" r="1.5"/><circle cx="810" cy="862.8" r="1.5"/><circle cx="802.3" cy="829.9" r="1.5"/><circle cx="798.9" cy="872.1" r="1.5"/><circle cx="771.7" cy="833.2" r="1.6"/><circle cx="768.6" cy="837.5" r="1.6"/><circle cx="804.7" cy="869.3" r="1.6"/><circle cx="767.1" cy="843" r="1.6"/><circle cx="815.4" cy="856.2" r="1.6"/><circle cx="780.7" cy="873.7" r="1.6"/><circle cx="793.5" cy="875.4" r="1.6"/><circle cx="797.5" cy="875.9" r="1.6"/><circle cx="776.5" cy="830" r="1.6"/><circle cx="765.6" cy="856.4" r="1.6"/><circle cx="782.4" cy="826.8" r="1.6"/><circle cx="815.7" cy="843.8" r="1.6"/><circle cx="776.1" cy="871.2" r="1.6"/><circle cx="810.5" cy="866.9" r="1.6"/><circle cx="806.2" cy="828.8" r="1.6"/><circle cx="772.1" cy="867.3" r="1.6"/><circle cx="808.6" cy="870.6" r="1.6"/><circle cx="815.2" cy="850.6" r="1.7"/><circle cx="809.3" cy="832.3" r="1.7"/><circle cx="788.2" cy="824.7" r="1.7"/><circle cx="763.6" cy="852.8" r="1.7"/><circle cx="818" cy="847.4" r="1.7"/><circle cx="786.4" cy="874.5" r="1.7"/><circle cx="768.1" cy="862.2" r="1.7"/><circle cx="801.4" cy="825.8" r="1.8"/><circle cx="814.1" cy="861.8" r="1.8"/><circle cx="813.2" cy="837.8" r="1.8"/><circle cx="803" cy="873.3" r="1.8"/><circle cx="764" cy="846" r="1.8"/><circle cx="772.3" cy="829" r="1.8"/><circle cx="818.7" cy="853.3" r="1.9"/><circle cx="764.6" cy="839.4" r="1.9"/><circle cx="784.2" cy="822.7" r="1.9"/><circle cx="767.4" cy="833.3" r="1.9"/><circle cx="789.7" cy="877.6" r="1.9"/><circle cx="767.7" cy="866.8" r="1.9"/><circle cx="776.8" cy="875.6" r="1.9"/><circle cx="763.8" cy="860.5" r="2"/><circle cx="818.2" cy="859.6" r="2"/><circle cx="813.8" cy="833.1" r="2"/><circle cx="817.5" cy="839.7" r="2"/><circle cx="799.5" cy="821.6" r="2"/><circle cx="791.9" cy="821.9" r="2"/><circle cx="815.1" cy="866.4" r="2"/><circle cx="805.8" cy="824.3" r="2"/><circle cx="807.4" cy="875" r="2"/><circle cx="760.9" cy="842.4" r="2"/><circle cx="822" cy="849.8" r="2.1"/><circle cx="786.2" cy="881.2" r="2.1"/><circle cx="795" cy="879.8" r="2.1"/><circle cx="767.5" cy="828.3" r="2.2"/><circle cx="762.6" cy="834.9" r="2.2"/><circle cx="787.6" cy="819.1" r="2.2"/><circle cx="820.8" cy="843.5" r="2.2"/><circle cx="813.3" cy="871.3" r="2.2"/><circle cx="766.6" cy="871.7" r="2.3"/><circle cx="822.4" cy="856.6" r="2.3"/><circle cx="778.8" cy="880.3" r="2.3"/><circle cx="795.5" cy="818.2" r="2.3"/><circle cx="815.8" cy="828.3" r="2.3"/><circle cx="771.8" cy="876.8" r="2.3"/><circle cx="819.9" cy="864.5" r="2.3"/><circle cx="810.9" cy="822.9" r="2.3"/><circle cx="804.2" cy="819.3" r="2.3"/><circle cx="799.6" cy="882.6" r="2.3"/><circle cx="756.7" cy="845.6" r="2.3"/><circle cx="756.7" cy="852.9" r="2.3"/><circle cx="774.7" cy="819.2" r="2.4"/><circle cx="768.3" cy="822.9" r="2.4"/><circle cx="758" cy="837.9" r="2.4"/><circle cx="782.6" cy="816.8" r="2.4"/><circle cx="826.6" cy="852.8" r="2.5"/><circle cx="823.1" cy="838.4" r="2.5"/><circle cx="782.1" cy="884.9" r="2.5"/><circle cx="821.4" cy="829.5" r="2.5"/><circle cx="773.4" cy="882.4" r="2.6"/><circle cx="816.7" cy="822.6" r="2.6"/><circle cx="795.4" cy="886.7" r="2.6"/><circle cx="804.6" cy="885.8" r="2.7"/><circle cx="787.5" cy="887.8" r="2.7"/><circle cx="777.3" cy="813.8" r="2.7"/><circle cx="767.1" cy="883.9" r="3.1"/><circle cx="810.4" cy="889.3" r="3.3"/><circle cx="780.3" cy="807.6" r="3.3"/><circle cx="753.2" cy="873.3" r="3.6"/><circle cx="740.3" cy="850.4" r="4.6"/><circle cx="772.1" cy="908.3" r="1.2"/><circle cx="771.9" cy="905.1" r="1.2"/><circle cx="774.8" cy="906.6" r="1.2"/><circle cx="768.9" cy="906.9" r="1.5"/><circle cx="775.4" cy="910.4" r="1.8"/><circle cx="769.3" cy="911" r="1.8"/><circle cx="768.9" cy="902.7" r="1.8"/><circle cx="772.1" cy="899.4" r="1.8"/><circle cx="772.7" cy="914.2" r="2"/><circle cx="812.4" cy="881.9" r="1.1"/><circle cx="812.5" cy="878.5" r="1.3"/><circle cx="816.1" cy="880.5" r="1.9"/><circle cx="795.5" cy="913.7" r="1.2"/><circle cx="798.8" cy="913.8" r="1.2"/><circle cx="797.1" cy="916.6" r="1.2"/><circle cx="797.2" cy="910.9" r="1.3"/><circle cx="800.5" cy="916.7" r="1.3"/><circle cx="793.5" cy="916.7" r="1.5"/><circle cx="793.2" cy="910.5" r="1.9"/><circle cx="801.3" cy="910.7" r="1.9"/><circle cx="804.3" cy="914.6" r="2.1"/><circle cx="789.8" cy="914.1" r="2.2"/><circle cx="798.5" cy="920.7" r="2.2"/><circle cx="793.1" cy="921.4" r="2.3"/><circle cx="796.4" cy="906.2" r="2.6"/><circle cx="802.5" cy="905.4" r="2.7"/><circle cx="804.3" cy="920.4" r="2.7"/><circle cx="787.4" cy="919.4" r="2.8"/><circle cx="807.6" cy="909.5" r="3.1"/><circle cx="789.3" cy="905.5" r="3.6"/><circle cx="783.6" cy="911.4" r="3.7"/><circle cx="796.8" cy="927.4" r="3.8"/><circle cx="863.4" cy="840.7" r="1"/><circle cx="866" cy="842" r="1"/><circle cx="863.6" cy="843.7" r="1"/><circle cx="865.8" cy="839.1" r="1"/><circle cx="866.4" cy="845.1" r="1.2"/><circle cx="860.7" cy="842.4" r="1.2"/><circle cx="862.9" cy="837.5" r="1.4"/><circle cx="869" cy="840.3" r="1.5"/><circle cx="870" cy="844.3" r="1.7"/><circle cx="859.1" cy="838.9" r="1.8"/><circle cx="859" cy="845.9" r="1.8"/><circle cx="866.5" cy="835.3" r="1.9"/><circle cx="871.1" cy="836.6" r="2"/><circle cx="864.6" cy="852.4" r="2.5"/><circle cx="853.7" cy="874.8" r="1.4"/><circle cx="856.6" cy="872.7" r="1.4"/><circle cx="857" cy="876.3" r="1.4"/><circle cx="853.2" cy="871.2" r="1.4"/><circle cx="853.8" cy="879.1" r="2"/><circle cx="849.6" cy="873.6" r="2"/><circle cx="856.7" cy="868.3" r="2.2"/><circle cx="861.8" cy="869.4" r="2.2"/><circle cx="848.5" cy="878.8" r="2.4"/><circle cx="860.7" cy="879.2" r="2.5"/><circle cx="856.7" cy="883.6" r="2.5"/><circle cx="865.8" cy="875.6" r="2.9"/><circle cx="867.9" cy="869.1" r="3.1"/><circle cx="911.3" cy="875.3" r="1.4"/><circle cx="915.4" cy="882.6" r="1.4"/><circle cx="911.8" cy="883" r="1.4"/><circle cx="915" cy="874.9" r="1.4"/><circle cx="917.9" cy="879.3" r="1.4"/><circle cx="908.8" cy="878.7" r="1.5"/><circle cx="907.5" cy="874.9" r="1.6"/><circle cx="918.9" cy="875.4" r="1.6"/><circle cx="919.4" cy="883" r="1.7"/><circle cx="907.7" cy="882.7" r="1.7"/><circle cx="909.6" cy="886.7" r="1.8"/><circle cx="904.5" cy="879.5" r="1.9"/><circle cx="918.6" cy="887.5" r="2"/><circle cx="908" cy="870.4" r="2"/><circle cx="924" cy="882.9" r="2"/><circle cx="925.7" cy="875.4" r="2.2"/><circle cx="900.7" cy="882.9" r="2.2"/><circle cx="912.3" cy="890.9" r="2.3"/><circle cx="923.9" cy="888.3" r="2.5"/><circle cx="928.9" cy="880.2" r="2.7"/><circle cx="906.4" cy="892.1" r="2.9"/><circle cx="897.7" cy="877.6" r="2.9"/><circle cx="927.5" cy="869.7" r="3"/><circle cx="898.9" cy="889" r="3.3"/><circle cx="916.1" cy="860.9" r="3.5"/><circle cx="879.3" cy="947.7" r="1.5"/><circle cx="882.7" cy="949.4" r="1.5"/><circle cx="879.5" cy="951.5" r="1.5"/><circle cx="882.8" cy="945" r="2.1"/><circle cx="883.3" cy="953.8" r="2.1"/><circle cx="875.3" cy="949.8" r="2.2"/><circle cx="887.2" cy="948" r="2.3"/><circle cx="877.7" cy="943.2" r="2.4"/><circle cx="888.8" cy="953.5" r="2.4"/><circle cx="872.2" cy="945.1" r="2.5"/><circle cx="878.2" cy="956.4" r="2.7"/><circle cx="872" cy="954.7" r="2.8"/><circle cx="888" cy="941.9" r="3"/><circle cx="882" cy="938.5" r="3.1"/><circle cx="891.1" cy="959.6" r="3.2"/><circle cx="793.8" cy="960.9" r="1.4"/><circle cx="798.7" cy="967.6" r="1.4"/><circle cx="795.1" cy="968.4" r="1.4"/><circle cx="797.4" cy="960.1" r="1.4"/><circle cx="800.6" cy="964" r="1.4"/><circle cx="791.9" cy="964.5" r="1.4"/><circle cx="790" cy="961.2" r="1.4"/><circle cx="801.2" cy="960.3" r="1.4"/><circle cx="802.7" cy="967.4" r="1.7"/><circle cx="791" cy="968.4" r="1.7"/><circle cx="794.9" cy="957" r="1.7"/><circle cx="797.6" cy="971.6" r="1.8"/><circle cx="799.5" cy="956.6" r="1.8"/><circle cx="804.6" cy="962.7" r="1.9"/><circle cx="793.1" cy="972.6" r="2"/><circle cx="787.6" cy="965.3" r="2.1"/><circle cx="802.4" cy="972.1" r="2.1"/><circle cx="785.6" cy="960.6" r="2.1"/><circle cx="807.5" cy="966.8" r="2.2"/><circle cx="796.7" cy="952.4" r="2.4"/><circle cx="804.5" cy="957" r="2.4"/><circle cx="809.1" cy="960.2" r="2.4"/><circle cx="786.4" cy="970.6" r="2.5"/><circle cx="788.9" cy="976" r="2.5"/><circle cx="796.7" cy="976.7" r="2.5"/><circle cx="784.9" cy="955.1" r="2.6"/><circle cx="792.2" cy="982.4" r="3.9"/><circle cx="588.6" cy="905.5" r="2.1"/><circle cx="590.4" cy="910.2" r="2.1"/><circle cx="575.8" cy="900.8" r="2.1"/><circle cx="578.1" cy="896.3" r="2.1"/><circle cx="588.1" cy="914.7" r="2.1"/><circle cx="589.2" cy="896.1" r="2.3"/><circle cx="569.8" cy="909.4" r="2.5"/><circle cx="572.7" cy="896.4" r="2.5"/><circle cx="579.4" cy="919.8" r="2.5"/><circle cx="594.9" cy="895.9" r="2.5"/><circle cx="590.8" cy="920" r="2.6"/><circle cx="575.4" cy="891" r="2.7"/><circle cx="565.1" cy="905.6" r="2.7"/><circle cx="573.3" cy="920.9" r="2.8"/><circle cx="565.5" cy="913.8" r="2.8"/><circle cx="589.7" cy="926.3" r="2.9"/><circle cx="576.3" cy="884.6" r="3"/><circle cx="606.6" cy="901.4" r="3"/><circle cx="560" cy="909.9" r="3"/><circle cx="596" cy="929.6" r="3.3"/><circle cx="569.9" cy="881.4" r="3.3"/><circle cx="610.8" cy="907.4" r="3.4"/><circle cx="597.3" cy="883.1" r="3.6"/><circle cx="614.4" cy="887.8" r="4.2"/><circle cx="622.2" cy="903.1" r="4.2"/><circle cx="644.9" cy="1005.2" r="1.1"/><circle cx="645.3" cy="1008.4" r="1.2"/><circle cx="648.2" cy="1006.3" r="1.4"/><circle cx="648.6" cy="1010.3" r="1.6"/><circle cx="686" cy="1009.2" r="1"/><circle cx="684.8" cy="1011.9" r="1"/><circle cx="683" cy="1009.5" r="1"/><circle cx="687.7" cy="1011.5" r="1"/><circle cx="689" cy="1008.8" r="1.1"/><circle cx="686.6" cy="1014.5" r="1.2"/><circle cx="681.5" cy="1012.5" r="1.5"/><circle cx="684.1" cy="1006.2" r="1.6"/><circle cx="688.1" cy="1005.2" r="1.7"/><circle cx="682.9" cy="1016.8" r="2.1"/><circle cx="691.8" cy="1011.9" r="2.2"/><circle cx="690.1" cy="1017" r="2.2"/><circle cx="678.9" cy="1008.6" r="2.2"/><circle cx="680.3" cy="1003.2" r="2.4"/><circle cx="693.2" cy="1006.3" r="2.6"/><circle cx="685.7" cy="1000.3" r="2.9"/><circle cx="708.5" cy="1051.1" r="1.1"/><circle cx="707.9" cy="1054.1" r="1.1"/><circle cx="705.3" cy="1052.1" r="1.3"/><circle cx="711.2" cy="1053.2" r="1.4"/><circle cx="706.1" cy="1048.5" r="1.5"/><circle cx="704.8" cy="1055.7" r="1.5"/><circle cx="710.2" cy="1056.9" r="1.6"/><circle cx="711.6" cy="1049.1" r="1.7"/><circle cx="709.1" cy="1045.6" r="1.7"/><circle cx="706.7" cy="1059.4" r="1.8"/><circle cx="702.1" cy="1049.7" r="1.8"/><circle cx="701" cy="1054.1" r="1.8"/><circle cx="714.4" cy="1055.9" r="1.8"/><circle cx="716" cy="1051.2" r="2.2"/><circle cx="703.3" cy="1044.9" r="2.2"/><circle cx="701.5" cy="1059.4" r="2.5"/><circle cx="707.2" cy="1040.8" r="2.6"/><circle cx="713.2" cy="1061.5" r="3"/><circle cx="707.2" cy="1065.3" r="3.2"/><circle cx="714.9" cy="1044.1" r="3.4"/><circle cx="666.7" cy="1041.9" r="1.9"/><circle cx="665.1" cy="1047.2" r="2.7"/><circle cx="671.4" cy="1045.2" r="3"/><circle cx="670.1" cy="1037.3" r="3"/><circle cx="658.4" cy="1046.7" r="3.1"/><circle cx="677.2" cy="1040.2" r="3.8"/><circle cx="670.2" cy="1053.6" r="4.6"/><circle cx="652.6" cy="1062.9" r="1.2"/><circle cx="649" cy="1063.6" r="1.6"/><circle cx="650.5" cy="1059.4" r="2"/><circle cx="652" cy="1067.2" r="2.2"/><circle cx="645.3" cy="1060.5" r="2.4"/><circle cx="646.2" cy="1068.1" r="2.8"/><circle cx="656.3" cy="1059.5" r="2.9"/><circle cx="657.9" cy="1065.9" r="2.9"/><circle cx="640.7" cy="1064.6" r="2.9"/><circle cx="647.1" cy="1054.2" r="3.3"/><circle cx="742.3" cy="1072.6" r="0.8"/><circle cx="743.8" cy="1070.5" r="0.8"/><circle cx="744.9" cy="1072.9" r="0.9"/><circle cx="740.4" cy="1069.8" r="1.7"/><circle cx="747.6" cy="1070" r="2.1"/><circle cx="743" cy="1076.4" r="2.1"/><circle cx="738.4" cy="1074" r="2.1"/><circle cx="729.8" cy="1102.8" r="1.3"/><circle cx="739.5" cy="1109.6" r="1.3"/><circle cx="729.9" cy="1109.7" r="1.3"/><circle cx="739.5" cy="1102.2" r="1.3"/><circle cx="740.7" cy="1106.2" r="1.4"/><circle cx="728.6" cy="1106.3" r="1.4"/><circle cx="743.1" cy="1103.3" r="1.5"/><circle cx="734.7" cy="1112.1" r="1.5"/><circle cx="734.7" cy="1099.6" r="1.6"/><circle cx="730.4" cy="1098.9" r="1.7"/><circle cx="738.8" cy="1098.2" r="1.8"/><circle cx="725.7" cy="1109.5" r="2"/><circle cx="733.4" cy="1095.1" r="2.1"/><circle cx="743.8" cy="1098.6" r="2.3"/><circle cx="738.7" cy="1092.6" r="2.9"/><circle cx="749.9" cy="1099.5" r="3"/><circle cx="718.1" cy="1113.4" r="3.9"/><circle cx="719.8" cy="1089.9" r="4.8"/><circle cx="890.4" cy="1055.5" r="0.5"/><circle cx="886.9" cy="1047.2" r="0.5"/><circle cx="887.8" cy="1045.1" r="0.5"/><circle cx="901.7" cy="1050.8" r="0.5"/><circle cx="900.8" cy="1052.9" r="0.5"/><circle cx="892.5" cy="1056.4" r="0.5"/><circle cx="896.1" cy="1041.6" r="0.5"/><circle cx="899.8" cy="1043.7" r="0.5"/><circle cx="888.8" cy="1054.3" r="0.5"/><circle cx="886.7" cy="1049.2" r="0.5"/><circle cx="901.9" cy="1048.7" r="0.5"/><circle cx="890.9" cy="1057.2" r="0.5"/><circle cx="897.8" cy="1042" r="0.5"/><circle cx="902.6" cy="1052.3" r="0.5"/><circle cx="886" cy="1045.6" r="0.5"/><circle cx="889.1" cy="1043.3" r="0.5"/><circle cx="899.5" cy="1054.6" r="0.5"/><circle cx="894.7" cy="1056.7" r="0.5"/><circle cx="893.9" cy="1041.3" r="0.5"/><circle cx="902" cy="1046.9" r="0.5"/><circle cx="886.6" cy="1051" r="0.5"/><circle cx="901.1" cy="1044.9" r="0.5"/><circle cx="887.5" cy="1053.1" r="0.5"/><circle cx="885.7" cy="1052.6" r="0.5"/><circle cx="902.9" cy="1045.4" r="0.5"/><circle cx="897.3" cy="1056.1" r="0.5"/><circle cx="891.3" cy="1041.8" r="0.5"/><circle cx="899.2" cy="1056.5" r="0.5"/><circle cx="889.4" cy="1041.5" r="0.5"/><circle cx="892.3" cy="1040.2" r="0.5"/><circle cx="896.3" cy="1057.7" r="0.5"/><circle cx="893.4" cy="1058" r="0.5"/><circle cx="887.2" cy="1043.3" r="0.5"/><circle cx="895.2" cy="1039.9" r="0.5"/><circle cx="901.4" cy="1054.7" r="0.5"/><circle cx="899.7" cy="1041.8" r="0.6"/><circle cx="888.6" cy="1056.2" r="0.6"/><circle cx="885.2" cy="1048" r="0.6"/><circle cx="903.4" cy="1050" r="0.6"/><circle cx="897.4" cy="1040.1" r="0.6"/><circle cx="903.7" cy="1047.9" r="0.6"/><circle cx="884.9" cy="1050.1" r="0.6"/><circle cx="901.6" cy="1043" r="0.6"/><circle cx="887" cy="1055" r="0.6"/><circle cx="889.2" cy="1058.2" r="0.6"/><circle cx="884.1" cy="1046.2" r="0.6"/><circle cx="904.5" cy="1051.8" r="0.6"/><circle cx="901.6" cy="1040.9" r="0.7"/><circle cx="891.7" cy="1059.1" r="0.7"/><circle cx="885.2" cy="1043.8" r="0.7"/><circle cx="903.5" cy="1054.2" r="0.7"/><circle cx="901.3" cy="1056.9" r="0.7"/><circle cx="895.1" cy="1059.5" r="0.7"/><circle cx="887.3" cy="1041.1" r="0.7"/><circle cx="893.5" cy="1038.4" r="0.8"/><circle cx="898.3" cy="1058.5" r="0.8"/><circle cx="899.6" cy="1039.6" r="0.8"/><circle cx="905.6" cy="1049.2" r="0.8"/><circle cx="896.4" cy="1038.1" r="0.8"/><circle cx="890.3" cy="1039.5" r="0.8"/><circle cx="903.9" cy="1043.4" r="0.8"/><circle cx="904.9" cy="1046" r="0.8"/><circle cx="884.7" cy="1054.5" r="0.8"/><circle cx="883.6" cy="1052" r="0.8"/><circle cx="883" cy="1048.8" r="0.8"/><circle cx="886.6" cy="1057.3" r="0.8"/><circle cx="900.7" cy="1059.3" r="0.9"/><circle cx="897.2" cy="1060.7" r="0.9"/><circle cx="887.8" cy="1038.6" r="0.9"/><circle cx="891.3" cy="1037.1" r="0.9"/><circle cx="889.7" cy="1060.6" r="0.9"/><circle cx="882.7" cy="1044.2" r="0.9"/><circle cx="906" cy="1053.7" r="0.9"/><circle cx="893.1" cy="1061.1" r="0.9"/><circle cx="884.7" cy="1041.3" r="0.9"/><circle cx="903.8" cy="1056.7" r="0.9"/><circle cx="894.7" cy="1036.1" r="1"/><circle cx="901.9" cy="1038.4" r="1"/><circle cx="887" cy="1060" r="1"/><circle cx="881.4" cy="1046.6" r="1"/><circle cx="907.2" cy="1051.3" r="1"/><circle cx="898.9" cy="1037" r="1"/><circle cx="906.5" cy="1043.8" r="1"/><circle cx="882" cy="1054.1" r="1"/><circle cx="904.1" cy="1040.8" r="1"/><circle cx="907.4" cy="1047.2" r="1"/><circle cx="881.2" cy="1050.8" r="1"/><circle cx="883.9" cy="1057.1" r="1"/><circle cx="899.7" cy="1061.9" r="1"/><circle cx="888.7" cy="1036" r="1"/><circle cx="891.1" cy="1063" r="1"/><circle cx="895.4" cy="1062.9" r="1"/><circle cx="903.5" cy="1059.6" r="1"/><circle cx="881.9" cy="1041.5" r="1"/><circle cx="906.7" cy="1056.5" r="1"/><circle cx="885" cy="1038.4" r="1.1"/><circle cx="892.3" cy="1034.4" r="1.1"/><circle cx="901.4" cy="1035.5" r="1.1"/><circle cx="904.8" cy="1037.9" r="1.1"/><circle cx="907.1" cy="1040.9" r="1.1"/><circle cx="897.2" cy="1034.5" r="1.1"/><circle cx="909.3" cy="1044.9" r="1.1"/><circle cx="880.9" cy="1056.9" r="1.1"/><circle cx="879.2" cy="1053.1" r="1.1"/><circle cx="909.6" cy="1049.3" r="1.2"/><circle cx="879.1" cy="1048.6" r="1.2"/><circle cx="884" cy="1060.2" r="1.2"/><circle cx="879.7" cy="1044" r="1.2"/><circle cx="887.8" cy="1062.9" r="1.2"/><circle cx="909" cy="1053.8" r="1.2"/><circle cx="898.1" cy="1064.5" r="1.2"/><circle cx="902.8" cy="1062.7" r="1.2"/><circle cx="893.3" cy="1065.3" r="1.2"/><circle cx="885.7" cy="1035.3" r="1.3"/><circle cx="906.7" cy="1059.7" r="1.3"/><circle cx="881.7" cy="1038.3" r="1.3"/><circle cx="889.4" cy="1032.8" r="1.3"/><circle cx="889.5" cy="1065.9" r="1.3"/><circle cx="878.7" cy="1040.8" r="1.3"/><circle cx="909.9" cy="1057.1" r="1.3"/><circle cx="899.9" cy="1032.5" r="1.4"/><circle cx="894.8" cy="1032.2" r="1.4"/><circle cx="908.2" cy="1037.7" r="1.4"/><circle cx="876.8" cy="1045.9" r="1.4"/><circle cx="911.9" cy="1051.9" r="1.4"/><circle cx="904.7" cy="1034.4" r="1.4"/><circle cx="884.4" cy="1063.7" r="1.5"/><circle cx="910.5" cy="1041.6" r="1.5"/><circle cx="912.2" cy="1046.9" r="1.5"/><circle cx="880.4" cy="1060.4" r="1.5"/><circle cx="876.4" cy="1050.9" r="1.5"/><circle cx="877.4" cy="1056.2" r="1.5"/><circle cx="896.1" cy="1067.6" r="1.5"/><circle cx="901.4" cy="1066" r="1.5"/><circle cx="906.4" cy="1063.4" r="1.5"/><circle cx="882" cy="1034.5" r="1.6"/><circle cx="885.8" cy="1031.6" r="1.6"/><circle cx="892" cy="1068.8" r="1.6"/><circle cx="910.3" cy="1061" r="1.6"/><circle cx="878.2" cy="1037" r="1.6"/><circle cx="891.7" cy="1029.8" r="1.6"/><circle cx="897.5" cy="1029.4" r="1.6"/><circle cx="903.3" cy="1030.7" r="1.6"/><circle cx="912.1" cy="1037.9" r="1.7"/><circle cx="886" cy="1067.4" r="1.7"/><circle cx="880.4" cy="1064.4" r="1.7"/><circle cx="873.5" cy="1048" r="1.7"/><circle cx="908.6" cy="1033.8" r="1.7"/><circle cx="875.1" cy="1042.3" r="1.7"/><circle cx="913.5" cy="1055.6" r="1.7"/><circle cx="876.3" cy="1060.2" r="1.7"/><circle cx="873.8" cy="1054.2" r="1.7"/><circle cx="899.7" cy="1069.8" r="1.7"/><circle cx="895.1" cy="1071.7" r="1.7"/><circle cx="881.8" cy="1030.3" r="1.7"/><circle cx="910.2" cy="1065.2" r="1.8"/><circle cx="878" cy="1032.7" r="1.8"/><circle cx="894.4" cy="1026.4" r="1.8"/><circle cx="887.9" cy="1027.8" r="1.8"/><circle cx="901.1" cy="1027" r="1.8"/><circle cx="874" cy="1038.1" r="1.8"/><circle cx="881.7" cy="1068.6" r="1.8"/><circle cx="871.1" cy="1044.3" r="1.8"/><circle cx="917.5" cy="1053.5" r="1.9"/><circle cx="916.3" cy="1039.4" r="1.9"/><circle cx="917.9" cy="1045.9" r="1.9"/><circle cx="913.1" cy="1033.6" r="1.9"/><circle cx="875.9" cy="1064.7" r="1.9"/><circle cx="898.8" cy="1074.4" r="2"/><circle cx="890.5" cy="1023.9" r="2"/><circle cx="883.5" cy="1026" r="2"/><circle cx="898" cy="1023.4" r="2"/><circle cx="891.5" cy="1074.6" r="2"/><circle cx="914.9" cy="1064.6" r="2"/><circle cx="873.4" cy="1033.3" r="2"/><circle cx="883.9" cy="1072.9" r="2"/><circle cx="918.9" cy="1058.1" r="2"/><circle cx="869.5" cy="1039.8" r="2.1"/><circle cx="877" cy="1069.5" r="2.1"/><circle cx="920.6" cy="1041.8" r="2.1"/><circle cx="918" cy="1034.7" r="2.2"/><circle cx="867.8" cy="1055.7" r="2.2"/><circle cx="871.1" cy="1063.4" r="2.2"/><circle cx="877.6" cy="1027.9" r="2.2"/><circle cx="908" cy="1074.7" r="2.2"/><circle cx="903.2" cy="1077" r="2.3"/><circle cx="885.9" cy="1021.4" r="2.3"/><circle cx="894" cy="1020.1" r="2.3"/><circle cx="914.5" cy="1069.8" r="2.3"/><circle cx="886.9" cy="1077.3" r="2.4"/><circle cx="878.9" cy="1074.7" r="2.5"/><circle cx="923.3" cy="1055" r="2.5"/><circle cx="924.6" cy="1045.7" r="2.6"/><circle cx="920.5" cy="1069.4" r="2.8"/><circle cx="836" cy="1023.2" r="1.1"/><circle cx="836.6" cy="1026.7" r="1.6"/><circle cx="832.5" cy="1024.9" r="1.9"/><circle cx="840.8" cy="1028.5" r="2.1"/><circle cx="833.2" cy="1019.7" r="2.5"/><circle cx="839.1" cy="1018.1" r="2.7"/><circle cx="866.5" cy="1001.5" r="1.2"/><circle cx="865.3" cy="998" r="1.5"/><circle cx="870.1" cy="998.7" r="2.5"/><circle cx="861.5" cy="1001.7" r="2.8"/><circle cx="867.3" cy="993" r="3"/><circle cx="860.3" cy="994.8" r="3.3"/><circle cx="870.2" cy="1005.4" r="3.3"/><circle cx="863" cy="1009.3" r="4"/><circle cx="819.2" cy="1073.6" r="0.4"/><circle cx="814.8" cy="1079.5" r="0.4"/><circle cx="811.6" cy="1077.2" r="0.4"/><circle cx="816.1" cy="1071.2" r="0.4"/><circle cx="816.5" cy="1079.6" r="0.4"/><circle cx="814.4" cy="1071.2" r="0.4"/><circle cx="819.8" cy="1075.2" r="0.4"/><circle cx="811.1" cy="1075.5" r="0.5"/><circle cx="818.4" cy="1071.9" r="0.6"/><circle cx="812.5" cy="1078.9" r="0.6"/><circle cx="817.6" cy="1070.1" r="0.6"/><circle cx="813.3" cy="1080.7" r="0.6"/><circle cx="811" cy="1073.5" r="0.6"/><circle cx="812.4" cy="1071.5" r="0.6"/><circle cx="820" cy="1077.2" r="0.7"/><circle cx="818.4" cy="1079.3" r="0.7"/><circle cx="810.2" cy="1071.4" r="0.7"/><circle cx="820.7" cy="1079.4" r="0.7"/><circle cx="815.5" cy="1081.3" r="0.7"/><circle cx="821.2" cy="1073.8" r="0.7"/><circle cx="815.3" cy="1069.4" r="0.7"/><circle cx="809.7" cy="1077.1" r="0.7"/><circle cx="820.6" cy="1071.6" r="0.7"/><circle cx="810.3" cy="1079.3" r="0.7"/><circle cx="813" cy="1069.3" r="0.7"/><circle cx="817.8" cy="1081.5" r="0.7"/><circle cx="822" cy="1076" r="0.7"/><circle cx="809" cy="1074.7" r="0.8"/><circle cx="813.8" cy="1083" r="0.8"/><circle cx="817.1" cy="1067.8" r="0.8"/><circle cx="811.2" cy="1081.6" r="0.8"/><circle cx="807.3" cy="1076.5" r="0.9"/><circle cx="819.8" cy="1069.2" r="0.9"/><circle cx="807.9" cy="1072.4" r="0.9"/><circle cx="823" cy="1078.4" r="0.9"/><circle cx="810.4" cy="1068.9" r="1"/><circle cx="820.4" cy="1081.9" r="1"/><circle cx="823.1" cy="1072.1" r="1"/><circle cx="807.7" cy="1079.2" r="1"/><circle cx="824.3" cy="1074.7" r="1"/><circle cx="816.4" cy="1083.8" r="1"/><circle cx="814.2" cy="1067" r="1"/><circle cx="819.5" cy="1066.4" r="1.1"/><circle cx="811.4" cy="1084.4" r="1.1"/><circle cx="816.6" cy="1065.1" r="1.1"/><circle cx="822.7" cy="1069.1" r="1.1"/><circle cx="808.4" cy="1082.2" r="1.1"/><circle cx="805.5" cy="1074.1" r="1.2"/><circle cx="823.5" cy="1081.4" r="1.2"/><circle cx="807.4" cy="1069.4" r="1.2"/><circle cx="825.9" cy="1077.4" r="1.2"/><circle cx="811.3" cy="1065.9" r="1.2"/><circle cx="819.4" cy="1084.9" r="1.3"/><circle cx="814.2" cy="1086.1" r="1.3"/><circle cx="804.7" cy="1078.2" r="1.3"/><circle cx="822.7" cy="1065.8" r="1.3"/><circle cx="808.4" cy="1085.5" r="1.3"/><circle cx="826.3" cy="1072.2" r="1.3"/><circle cx="819.4" cy="1063.1" r="1.3"/><circle cx="826" cy="1068.7" r="1.3"/><circle cx="804.3" cy="1071" r="1.4"/><circle cx="826.9" cy="1080.8" r="1.4"/><circle cx="807.7" cy="1065.9" r="1.4"/><circle cx="823" cy="1084.9" r="1.4"/><circle cx="802.3" cy="1075.4" r="1.5"/><circle cx="804.9" cy="1081.9" r="1.5"/><circle cx="817.4" cy="1087.9" r="1.5"/><circle cx="813.6" cy="1063.2" r="1.5"/><circle cx="828.7" cy="1075.1" r="1.5"/><circle cx="811.1" cy="1088.1" r="1.5"/><circle cx="826.3" cy="1064.9" r="1.5"/><circle cx="823" cy="1062.1" r="1.6"/><circle cx="800.6" cy="1071.8" r="1.6"/><circle cx="804" cy="1067.1" r="1.6"/><circle cx="827" cy="1084.7" r="1.7"/><circle cx="804.5" cy="1085.9" r="1.7"/><circle cx="830.7" cy="1079.1" r="2"/><circle cx="806.8" cy="1090.3" r="2.3"/><circle cx="827.6" cy="1060.1" r="2.5"/><circle cx="832.1" cy="1084.3" r="2.6"/><circle cx="839.1" cy="1068.6" r="5"/><circle cx="845.7" cy="1142.6" r="1.5"/><circle cx="854.9" cy="1134.1" r="1.5"/><circle cx="851.5" cy="1132.1" r="1.5"/><circle cx="858.5" cy="1136" r="1.7"/><circle cx="840.5" cy="1145.5" r="2.1"/><circle cx="862.2" cy="1152" r="3.1"/><circle cx="1027.5" cy="863.4" r="1"/><circle cx="1027.4" cy="859.9" r="1.6"/><circle cx="1031" cy="862.2" r="1.8"/><circle cx="1023.8" cy="862.5" r="1.9"/><circle cx="1031.6" cy="857.1" r="2.5"/><circle cx="1023" cy="856.9" r="2.8"/><circle cx="1003" cy="891.1" r="1.2"/><circle cx="1005.9" cy="893" r="1.4"/><circle cx="1002.3" cy="894.9" r="1.8"/><circle cx="1006.3" cy="889" r="1.8"/><circle cx="1006.4" cy="897.5" r="2.2"/><circle cx="1010.2" cy="891.9" r="2.2"/><circle cx="998.3" cy="891.5" r="2.6"/><circle cx="1013.1" cy="898" r="3.5"/><circle cx="1000.3" cy="901.6" r="4.3"/><circle cx="1038.9" cy="893.9" r="1.3"/><circle cx="1036.2" cy="896.2" r="1.3"/><circle cx="1035.6" cy="892.8" r="1.3"/><circle cx="1039.6" cy="897.4" r="1.3"/><circle cx="1032.5" cy="895.1" r="1.7"/><circle cx="1038.4" cy="890" r="1.7"/><circle cx="1036.6" cy="900.3" r="1.9"/><circle cx="1043" cy="894.9" r="2"/><circle cx="1031.7" cy="899.8" r="2.1"/><circle cx="1043.1" cy="889.9" r="2.1"/><circle cx="1031.8" cy="890.3" r="2.3"/><circle cx="1035.4" cy="886" r="2.4"/><circle cx="1041.8" cy="901.8" r="2.6"/><circle cx="1047.5" cy="898.7" r="2.9"/><circle cx="1026.7" cy="894.2" r="3.2"/><circle cx="1025.7" cy="901.4" r="3.2"/><circle cx="1041.7" cy="883.8" r="3.3"/><circle cx="1033.7" cy="906" r="3.6"/><circle cx="1061.2" cy="897.2" r="1.3"/><circle cx="1064.8" cy="898.8" r="1.7"/><circle cx="1061.2" cy="901.2" r="1.8"/><circle cx="1064.2" cy="894.3" r="1.9"/><circle cx="1069.3" cy="896" r="2.6"/><circle cx="1088.3" cy="931.4" r="1.1"/><circle cx="1084.1" cy="932.2" r="2.2"/><circle cx="1091.9" cy="929.1" r="2.3"/><circle cx="1086.5" cy="927" r="2.6"/><circle cx="1095.9" cy="933.2" r="2.6"/><circle cx="1080.1" cy="927.7" r="2.9"/><circle cx="1091.6" cy="922.9" r="3"/><circle cx="1097.8" cy="926.8" r="3.2"/><circle cx="1073.7" cy="930.5" r="3.2"/><circle cx="1082.9" cy="921.1" r="3.4"/><circle cx="1097.9" cy="919.1" r="3.5"/><circle cx="1107.7" cy="963.2" r="1.1"/><circle cx="1109.9" cy="960.8" r="1.2"/><circle cx="1111.1" cy="964.2" r="1.5"/><circle cx="1105.8" cy="959.6" r="2.1"/><circle cx="1114.3" cy="960.7" r="2.4"/><circle cx="1107.5" cy="968.2" r="2.9"/><circle cx="1110.4" cy="955.8" r="2.9"/><circle cx="1047.9" cy="991.3" r="0.7"/><circle cx="1056.7" cy="996.1" r="0.7"/><circle cx="1046" cy="1005.2" r="0.7"/><circle cx="1053.1" cy="992.2" r="0.7"/><circle cx="1055.2" cy="993.3" r="0.7"/><circle cx="1048.1" cy="1006.4" r="0.7"/><circle cx="1043.8" cy="1004.1" r="0.8"/><circle cx="1051" cy="990.7" r="0.9"/><circle cx="1056.5" cy="1001.8" r="1"/><circle cx="1042.6" cy="995.6" r="1"/><circle cx="1043.7" cy="992.8" r="1.1"/><circle cx="1055.4" cy="1004.6" r="1.1"/><circle cx="1041.9" cy="1002" r="1.2"/><circle cx="1058.2" cy="993.6" r="1.3"/><circle cx="1050.9" cy="1007.1" r="1.3"/><circle cx="1048.8" cy="988.5" r="1.3"/><circle cx="1058" cy="998.8" r="1.4"/><circle cx="1054.5" cy="1007.9" r="1.4"/><circle cx="1041.1" cy="998.6" r="1.4"/><circle cx="1045.3" cy="989.7" r="1.4"/><circle cx="1059.8" cy="1002.1" r="1.5"/><circle cx="1039.2" cy="995.2" r="1.5"/><circle cx="1055.5" cy="990.1" r="1.5"/><circle cx="1045.5" cy="1008.3" r="1.5"/><circle cx="1041.9" cy="1006.7" r="1.5"/><circle cx="1052.4" cy="987.6" r="1.5"/><circle cx="1060.9" cy="996.2" r="1.6"/><circle cx="1058.8" cy="1006" r="1.6"/><circle cx="1049.1" cy="1010.6" r="1.8"/><circle cx="1038.6" cy="1004.1" r="1.8"/><circle cx="1037.1" cy="999.8" r="1.8"/><circle cx="1046" cy="985.6" r="1.8"/><circle cx="1059.8" cy="989.9" r="1.8"/><circle cx="1041.6" cy="987.1" r="1.9"/><circle cx="1053.4" cy="1011.9" r="1.9"/><circle cx="1063.4" cy="999.9" r="1.9"/><circle cx="1034.9" cy="995.8" r="1.9"/><circle cx="1063.6" cy="992.6" r="1.9"/><circle cx="1042.2" cy="1011.1" r="1.9"/><circle cx="1056.4" cy="985.8" r="2"/><circle cx="1045.9" cy="1014.1" r="2"/><circle cx="1037.7" cy="1008.9" r="2.2"/><circle cx="1061.4" cy="985.3" r="2.2"/><circle cx="1057.2" cy="1015.2" r="2.2"/><circle cx="1067.8" cy="1002.4" r="2.2"/><circle cx="1050.7" cy="1016.2" r="2.3"/><circle cx="1042.4" cy="982" r="2.4"/><circle cx="1047.5" cy="979.3" r="2.5"/><circle cx="1038" cy="1014.4" r="2.5"/><circle cx="1068.7" cy="1008.2" r="2.8"/><circle cx="1047.8" cy="1021.5" r="2.9"/><circle cx="1025.8" cy="1011.1" r="3.1"/><circle cx="1061.1" cy="1022.9" r="3.5"/><circle cx="1036.2" cy="1021" r="3.5"/><circle cx="1020.5" cy="1001.8" r="3.6"/><circle cx="1073.7" cy="985.1" r="3.6"/><circle cx="1055.1" cy="964.5" r="4.5"/><circle cx="1091.3" cy="1036.6" r="1"/><circle cx="1093.1" cy="1040" r="2"/><circle cx="1095.4" cy="1035.3" r="2.4"/><circle cx="1089.6" cy="1045.1" r="3.2"/><circle cx="1099.4" cy="1040.8" r="3.5"/><circle cx="475" cy="502" r="9.6"/><circle cx="648.5" cy="689" r="9.6"/><circle cx="662" cy="708" r="9.6"/><circle cx="667" cy="726" r="7.5"/><circle cx="664.5" cy="742" r="6.5"/><circle cx="721.7" cy="940" r="13.1"/><circle cx="613.4" cy="848" r="8.6"/><circle cx="1056" cy="1054" r="8.1"/><circle cx="1074.4" cy="1048.5" r="8.6"/><circle cx="1064" cy="1038" r="5.5"/><circle cx="1084" cy="1022.4" r="5.5"/><circle cx="1091" cy="1011.6" r="5.5"/><circle cx="1094.5" cy="998.8" r="5.5"/><circle cx="1001.6" cy="988" r="6.5"/></g>
<g fill="#fff" fill-opacity=".13" stroke="#f4e172" stroke-width="1.9"><circle cx="319.7" cy="532.7" r="1.4"/><circle cx="312.2" cy="552.8" r="1.6"/><circle cx="334.3" cy="546.9" r="1.8"/><circle cx="306.7" cy="540.6" r="1.8"/><circle cx="314.7" cy="531.7" r="2"/><circle cx="327.5" cy="529.8" r="2"/><circle cx="331.2" cy="553.7" r="2"/><circle cx="309.6" cy="534.4" r="2"/><circle cx="334.2" cy="535.3" r="2.1"/><circle cx="306.7" cy="552.6" r="2.1"/><circle cx="321.9" cy="527.9" r="2.2"/><circle cx="319.2" cy="559.3" r="2.2"/><circle cx="338.1" cy="542.7" r="2.2"/><circle cx="330.4" cy="559.6" r="2.2"/><circle cx="303.5" cy="545.5" r="2.3"/><circle cx="312.6" cy="558.5" r="2.4"/><circle cx="337.1" cy="552.1" r="2.4"/><circle cx="316" cy="525.7" r="2.4"/><circle cx="315.5" cy="564.4" r="2.4"/><circle cx="333.7" cy="529.1" r="2.5"/><circle cx="305.9" cy="559" r="2.6"/><circle cx="300.3" cy="551.4" r="2.7"/><circle cx="342.8" cy="547.8" r="3"/><circle cx="337.6" cy="559.5" r="3.3"/><circle cx="310.6" cy="520.4" r="3.4"/><circle cx="321.6" cy="569.1" r="3.6"/><circle cx="330.8" cy="567.6" r="4"/><circle cx="297.2" cy="559.6" r="4.4"/><circle cx="307.5" cy="567.6" r="4.4"/><circle cx="393.6" cy="521.2" r="1.9"/><circle cx="378.9" cy="514.5" r="2.6"/><circle cx="372.2" cy="516.3" r="2.6"/><circle cx="367" cy="543.8" r="3.1"/><circle cx="363.9" cy="529.3" r="3.2"/><circle cx="364.9" cy="521.2" r="3.2"/><circle cx="378.1" cy="548.3" r="3.3"/><circle cx="396.2" cy="514.7" r="3.3"/><circle cx="384.6" cy="509.2" r="3.4"/><circle cx="292.8" cy="584.9" r="2.6"/><circle cx="292.7" cy="576.7" r="2.9"/><circle cx="280.4" cy="584.7" r="3.2"/><circle cx="279.1" cy="575.9" r="3.9"/><circle cx="301.6" cy="581.1" r="5.2"/><circle cx="288.3" cy="594" r="5.8"/><circle cx="334.2" cy="592.1" r="1.3"/><circle cx="332" cy="600.2" r="1.4"/><circle cx="339.5" cy="589.8" r="2.8"/><circle cx="366.3" cy="585.8" r="1.4"/><circle cx="370.9" cy="586.4" r="1.5"/><circle cx="363.8" cy="581.5" r="1.9"/><circle cx="359.1" cy="585.2" r="2.3"/><circle cx="372.1" cy="576.9" r="2.5"/><circle cx="365.4" cy="575.5" r="2.6"/><circle cx="357.7" cy="577.9" r="3.4"/><circle cx="360.3" cy="569.8" r="3.4"/><circle cx="350.8" cy="584.8" r="4.3"/><circle cx="348.5" cy="574.3" r="4.8"/><circle cx="284.9" cy="440.8" r="1.9"/><circle cx="284.5" cy="435.2" r="1.9"/><circle cx="289.5" cy="437.6" r="1.9"/><circle cx="279.9" cy="438.4" r="1.9"/><circle cx="280.2" cy="444.3" r="2.3"/><circle cx="279.1" cy="432.4" r="2.4"/><circle cx="289.3" cy="431.5" r="2.4"/><circle cx="290.3" cy="443.6" r="2.4"/><circle cx="285.5" cy="448.4" r="2.7"/><circle cx="395.4" cy="419.1" r="2.3"/><circle cx="400.5" cy="414.3" r="2.4"/><circle cx="394" cy="412.7" r="2.6"/><circle cx="392.1" cy="425.2" r="2.9"/><circle cx="396.9" cy="431.5" r="3.4"/><circle cx="407.3" cy="410.7" r="3.6"/><circle cx="413.7" cy="417.1" r="3.7"/><circle cx="387" cy="417.8" r="4.4"/><circle cx="497.9" cy="397.4" r="1.6"/><circle cx="493.6" cy="400" r="1.6"/><circle cx="493.1" cy="394.3" r="2.4"/><circle cx="498.4" cy="403.1" r="2.4"/><circle cx="487.9" cy="398.5" r="2.5"/><circle cx="499.1" cy="391.6" r="2.6"/><circle cx="503.6" cy="398.9" r="2.6"/><circle cx="492.3" cy="405.9" r="2.7"/><circle cx="484.9" cy="405.1" r="3"/><circle cx="506.6" cy="392.1" r="3.2"/><circle cx="486.6" cy="391.1" r="3.2"/><circle cx="493.4" cy="386.7" r="3.3"/><circle cx="505.4" cy="407" r="4"/><circle cx="497.5" cy="412.4" r="4"/><circle cx="479.8" cy="396.9" r="4"/><circle cx="511.9" cy="399.8" r="4"/><circle cx="502" cy="383.7" r="4.1"/><circle cx="476.1" cy="406.2" r="4.2"/><circle cx="511.9" cy="384.7" r="4.2"/><circle cx="518.6" cy="392.4" r="4.2"/><circle cx="487.6" cy="413.6" r="4.2"/><circle cx="485.3" cy="381.9" r="4.4"/><circle cx="476" cy="387.3" r="4.6"/><circle cx="494.6" cy="376.4" r="4.7"/><circle cx="477.3" cy="416.9" r="4.9"/><circle cx="504.4" cy="428.6" r="5.6"/><circle cx="468.2" cy="397.4" r="5.9"/><circle cx="507.8" cy="373.5" r="6"/><circle cx="497.4" cy="364.2" r="6.1"/><circle cx="526.3" cy="402.2" r="6.6"/><circle cx="463.3" cy="383.8" r="6.9"/><circle cx="483.4" cy="369" r="7"/><circle cx="570.4" cy="406.8" r="1.8"/><circle cx="564.9" cy="404.4" r="2.5"/><circle cx="564.9" cy="392.4" r="3.3"/><circle cx="573.1" cy="413.3" r="3.6"/><circle cx="575.4" cy="384.7" r="3.7"/><circle cx="594.3" cy="449.4" r="1.4"/><circle cx="602.8" cy="444" r="2.2"/><circle cx="589.4" cy="451.9" r="2.4"/><circle cx="598.9" cy="434.8" r="2.5"/><circle cx="591.5" cy="433.2" r="2.5"/><circle cx="597.5" cy="454" r="2.5"/><circle cx="605" cy="437.9" r="2.7"/><circle cx="605.1" cy="450.4" r="3"/><circle cx="596.6" cy="428" r="3"/><circle cx="603.7" cy="458.4" r="3.4"/><circle cx="578.5" cy="442.6" r="3.4"/><circle cx="610.2" cy="443.9" r="3.6"/><circle cx="613.1" cy="452.3" r="3.6"/><circle cx="604.9" cy="429.8" r="3.7"/><circle cx="585.8" cy="465.9" r="4.4"/><circle cx="601.8" cy="420.3" r="4.6"/><circle cx="597.8" cy="466.3" r="4.8"/><circle cx="589.8" cy="419.7" r="5.7"/><circle cx="573" cy="452" r="5.7"/><circle cx="617.2" cy="433.3" r="7.4"/><circle cx="572.1" cy="431.2" r="8"/><circle cx="493.2" cy="466.5" r="2.9"/><circle cx="494.6" cy="474.3" r="3.3"/><circle cx="522" cy="465.8" r="3.5"/><circle cx="500.8" cy="481" r="3.6"/><circle cx="505.3" cy="449" r="3.7"/><circle cx="504.5" cy="496.9" r="2.2"/><circle cx="527.4" cy="559.6" r="3.4"/><circle cx="444" cy="540.4" r="1.9"/><circle cx="439.5" cy="543.5" r="1.9"/><circle cx="444.4" cy="552.4" r="2.3"/><circle cx="445.4" cy="534.3" r="2.6"/><circle cx="458.1" cy="537.3" r="2.7"/><circle cx="437.8" cy="550" r="3"/><circle cx="438.3" cy="536.9" r="3.1"/><circle cx="448.1" cy="559.3" r="3.7"/><circle cx="431" cy="543.2" r="4.9"/><circle cx="588.9" cy="572.6" r="1.3"/><circle cx="589.3" cy="558.2" r="1.7"/><circle cx="590.4" cy="577.3" r="2"/><circle cx="596.8" cy="578" r="2.6"/><circle cx="586" cy="549.4" r="2.9"/><circle cx="578.2" cy="554.1" r="2.9"/><circle cx="603.4" cy="574.5" r="3.1"/><circle cx="571.1" cy="557.2" r="3.2"/><circle cx="578.5" cy="545.8" r="3.7"/><circle cx="529.8" cy="605.2" r="1.8"/><circle cx="448.6" cy="624.2" r="2.2"/><circle cx="442.5" cy="620.4" r="3.3"/><circle cx="454.5" cy="629.3" r="3.7"/><circle cx="450.5" cy="616.8" r="3.7"/><circle cx="479.9" cy="685.1" r="1.4"/><circle cx="502.1" cy="679.3" r="2.7"/><circle cx="496.8" cy="689.5" r="3.3"/><circle cx="458.6" cy="694.9" r="3.3"/><circle cx="492.8" cy="697.3" r="3.8"/><circle cx="398.4" cy="699.2" r="2.7"/><circle cx="609.3" cy="740" r="1.6"/><circle cx="612.1" cy="731.3" r="1.6"/><circle cx="610.1" cy="744.9" r="1.6"/><circle cx="621.6" cy="734.1" r="1.6"/><circle cx="603.3" cy="733.3" r="1.6"/><circle cx="620.8" cy="729.2" r="1.6"/><circle cx="605.3" cy="743.8" r="1.6"/><circle cx="599.8" cy="737" r="1.8"/><circle cx="620.7" cy="747.5" r="1.8"/><circle cx="605.4" cy="725.5" r="1.9"/><circle cx="625.1" cy="744.4" r="1.9"/><circle cx="600.9" cy="728.6" r="1.9"/><circle cx="606.4" cy="749" r="2"/><circle cx="600.1" cy="742.5" r="2"/><circle cx="609.3" cy="721.3" r="2"/><circle cx="596.6" cy="732.4" r="2.1"/><circle cx="629.6" cy="740.7" r="2.2"/><circle cx="617.2" cy="718.5" r="2.3"/><circle cx="608.7" cy="754.5" r="2.3"/><circle cx="594.7" cy="739.8" r="2.3"/><circle cx="631.5" cy="733.1" r="2.3"/><circle cx="625.9" cy="750.3" r="2.4"/><circle cx="597.9" cy="723.2" r="2.6"/><circle cx="590.3" cy="734.6" r="2.8"/><circle cx="636" cy="738.3" r="2.9"/><circle cx="632.2" cy="747.1" r="3"/><circle cx="601.6" cy="755.4" r="3.1"/><circle cx="619.7" cy="763.3" r="3.2"/><circle cx="639.9" cy="745.1" r="3.2"/><circle cx="596.3" cy="715.7" r="3.4"/><circle cx="584.4" cy="729.4" r="3.4"/><circle cx="618.1" cy="711.2" r="3.4"/><circle cx="626.6" cy="709.8" r="3.5"/><circle cx="630" cy="756.8" r="3.6"/><circle cx="599.2" cy="763.5" r="3.6"/><circle cx="586.6" cy="741.9" r="3.6"/><circle cx="639.4" cy="730.9" r="3.6"/><circle cx="638.3" cy="753.5" r="3.7"/><circle cx="588.6" cy="719.9" r="3.7"/><circle cx="610.3" cy="707" r="3.7"/><circle cx="613.2" cy="768.9" r="3.7"/><circle cx="628.1" cy="765.6" r="3.7"/><circle cx="635.5" cy="709.9" r="3.7"/><circle cx="585.7" cy="751" r="3.8"/><circle cx="640" cy="721.6" r="3.8"/><circle cx="647.8" cy="726.9" r="3.9"/><circle cx="590.1" cy="763.1" r="3.9"/><circle cx="579" cy="736.6" r="3.9"/><circle cx="645.3" cy="738" r="3.9"/><circle cx="597.9" cy="706.8" r="4"/><circle cx="579.4" cy="721.8" r="4.1"/><circle cx="604.4" cy="699.6" r="4.1"/><circle cx="618.6" cy="701.6" r="4.5"/><circle cx="629.2" cy="700.5" r="4.5"/><circle cx="588.2" cy="710" r="4.5"/><circle cx="637.9" cy="763.5" r="4.6"/><circle cx="576.3" cy="746.7" r="4.8"/><circle cx="622.1" cy="774" r="4.9"/><circle cx="571.5" cy="729.1" r="5"/><circle cx="576.3" cy="710.7" r="5.7"/><circle cx="635" cy="775.8" r="6.4"/><circle cx="564.9" cy="693.6" r="1.8"/><circle cx="567.9" cy="705.5" r="3.9"/><circle cx="556.4" cy="798.9" r="3.3"/><circle cx="600.4" cy="793" r="3.5"/><circle cx="704.8" cy="648.3" r="1.9"/><circle cx="702.9" cy="653.6" r="2"/><circle cx="726.8" cy="651.8" r="2.1"/><circle cx="723.4" cy="640.4" r="2.3"/><circle cx="711.3" cy="664" r="2.4"/><circle cx="719.7" cy="634.7" r="2.8"/><circle cx="703.3" cy="641.9" r="3"/><circle cx="727.2" cy="659" r="3"/><circle cx="733.2" cy="654.1" r="3"/><circle cx="700.4" cy="660.3" r="3.4"/><circle cx="718.5" cy="666.9" r="3.7"/><circle cx="731.2" cy="639" r="4"/><circle cx="697.1" cy="648.4" r="4"/><circle cx="695" cy="638.6" r="4.3"/><circle cx="738.2" cy="646.3" r="4.5"/><circle cx="715.2" cy="626.5" r="4.8"/><circle cx="730" cy="669.8" r="6.4"/><circle cx="795" cy="688" r="2.8"/><circle cx="715.7" cy="686.4" r="1.6"/><circle cx="720.4" cy="683.7" r="2.2"/><circle cx="714.5" cy="680.2" r="3"/><circle cx="853.3" cy="742.2" r="1.7"/><circle cx="846.9" cy="734.7" r="1.8"/><circle cx="867.5" cy="736.2" r="2.1"/><circle cx="866.4" cy="728.4" r="2.3"/><circle cx="845.3" cy="728.9" r="2.5"/><circle cx="850.8" cy="722.2" r="2.6"/><circle cx="841.9" cy="738.6" r="2.9"/><circle cx="872.6" cy="731.7" r="3"/><circle cx="850.4" cy="748.9" r="3"/><circle cx="843.3" cy="721.8" r="3.2"/><circle cx="838.1" cy="731.6" r="3.4"/><circle cx="856.8" cy="716.8" r="3.7"/><circle cx="847.8" cy="714.1" r="4"/><circle cx="833.8" cy="741.9" r="4.1"/><circle cx="881.4" cy="728.4" r="4.8"/><circle cx="847.2" cy="758.2" r="5.2"/><circle cx="834.7" cy="756.9" r="5.7"/><circle cx="879.8" cy="713.9" r="5.9"/><circle cx="825.7" cy="732.9" r="6.3"/><circle cx="854.8" cy="702.4" r="8"/><circle cx="835.5" cy="708.1" r="8"/><circle cx="723.6" cy="789.4" r="1.6"/><circle cx="722.2" cy="770.6" r="1.9"/><circle cx="734.4" cy="787.5" r="2.2"/><circle cx="732.7" cy="772.2" r="2.6"/><circle cx="716.3" cy="768.3" r="2.7"/><circle cx="726" cy="795" r="2.8"/><circle cx="719.8" cy="799" r="2.8"/><circle cx="727.8" cy="766.3" r="3.4"/><circle cx="702.9" cy="780.2" r="3.6"/><circle cx="711.3" cy="800.1" r="4"/><circle cx="734.7" cy="795.6" r="4.3"/><circle cx="707.6" cy="768.6" r="4.3"/><circle cx="720.3" cy="760.4" r="4.4"/><circle cx="770.3" cy="755.3" r="1.7"/><circle cx="845.8" cy="798.5" r="1.3"/><circle cx="903.5" cy="801.8" r="1.3"/><circle cx="899.8" cy="799.7" r="1.3"/><circle cx="918.1" cy="798.3" r="1.3"/><circle cx="915.7" cy="805" r="1.3"/><circle cx="902.1" cy="792.9" r="1.5"/><circle cx="913.7" cy="809.3" r="1.7"/><circle cx="904.4" cy="788.6" r="1.7"/><circle cx="919.2" cy="793.6" r="1.8"/><circle cx="897.7" cy="795.3" r="1.9"/><circle cx="910.2" cy="813.3" r="1.9"/><circle cx="923.1" cy="789.4" r="2.2"/><circle cx="923.4" cy="797.7" r="2.3"/><circle cx="928.1" cy="801.9" r="2.3"/><circle cx="892.5" cy="788.1" r="2.4"/><circle cx="913.6" cy="782.3" r="2.5"/><circle cx="911.9" cy="819.3" r="2.7"/><circle cx="901.8" cy="782.7" r="2.7"/><circle cx="928.6" cy="793.3" r="2.8"/><circle cx="924.1" cy="813.1" r="3.2"/><circle cx="920.7" cy="820.4" r="3.2"/><circle cx="897.3" cy="816.7" r="3.2"/><circle cx="900.3" cy="774.9" r="3.5"/><circle cx="893.7" cy="780.6" r="3.5"/><circle cx="884.9" cy="797.8" r="3.6"/><circle cx="931.4" cy="808.8" r="3.6"/><circle cx="930.5" cy="785.2" r="3.8"/><circle cx="881.5" cy="809.5" r="4.1"/><circle cx="730.6" cy="870.7" r="1.7"/><circle cx="690" cy="892.2" r="1.8"/><circle cx="687.4" cy="887.6" r="1.8"/><circle cx="702.3" cy="889.2" r="1.8"/><circle cx="699.4" cy="880.5" r="2.1"/><circle cx="701.1" cy="901.6" r="2.9"/><circle cx="697.5" cy="873.8" r="3.1"/><circle cx="705.8" cy="875.9" r="3.8"/><circle cx="681.7" cy="875.1" r="4"/><circle cx="672.8" cy="880.2" r="4.7"/><circle cx="707.9" cy="908" r="4.7"/><circle cx="684.9" cy="910" r="5.2"/><circle cx="673.9" cy="893.3" r="5.3"/><circle cx="736.6" cy="892.3" r="1.3"/><circle cx="730.5" cy="889.4" r="3.8"/><circle cx="734.4" cy="880.2" r="4.4"/><circle cx="740.4" cy="946" r="1.3"/><circle cx="737.1" cy="942.6" r="1.8"/><circle cx="753.4" cy="933.1" r="4.5"/><circle cx="795.8" cy="824.5" r="1.4"/><circle cx="778.1" cy="825.9" r="1.5"/><circle cx="783" cy="877.4" r="1.5"/><circle cx="771.7" cy="871.7" r="1.5"/><circle cx="810.6" cy="828" r="1.6"/><circle cx="801.7" cy="877.8" r="1.6"/><circle cx="760.6" cy="849.2" r="1.6"/><circle cx="779.6" cy="821.3" r="1.7"/><circle cx="760.7" cy="856.5" r="1.8"/><circle cx="791" cy="883.2" r="1.8"/><circle cx="762.7" cy="865.5" r="1.9"/><circle cx="818.8" cy="834.6" r="1.9"/><circle cx="806.4" cy="880.2" r="1.9"/><circle cx="812.4" cy="876.7" r="2"/><circle cx="791.1" cy="814.7" r="2"/><circle cx="761" cy="870.9" r="2.1"/><circle cx="818.9" cy="870.3" r="2.1"/><circle cx="766" cy="877.4" r="2.1"/><circle cx="800.3" cy="815" r="2.2"/><circle cx="752" cy="849.3" r="2.3"/><circle cx="811.8" cy="882.6" r="2.3"/><circle cx="752.9" cy="841.1" r="2.3"/><circle cx="785.8" cy="811.7" r="2.3"/><circle cx="818.4" cy="876.4" r="2.3"/><circle cx="826.4" cy="833.2" r="2.4"/><circle cx="792.2" cy="892.5" r="2.7"/><circle cx="823.3" cy="823.2" r="2.7"/><circle cx="800.4" cy="891.1" r="2.7"/><circle cx="747.8" cy="854.6" r="2.8"/><circle cx="746.9" cy="844.6" r="2.9"/><circle cx="818.7" cy="883.4" r="2.9"/><circle cx="771.3" cy="810.2" r="3"/><circle cx="749.9" cy="834.7" r="3"/><circle cx="833.3" cy="835.1" r="3.1"/><circle cx="830" cy="826.9" r="3.2"/><circle cx="769.7" cy="891.1" r="3.3"/><circle cx="797.5" cy="898.4" r="3.5"/><circle cx="824.7" cy="815" r="3.9"/><circle cx="742.6" cy="861.2" r="3.9"/><circle cx="787.5" cy="899.5" r="4"/><circle cx="744.8" cy="870.6" r="4"/><circle cx="806.6" cy="897.1" r="4.1"/><circle cx="827.5" cy="883.5" r="4.2"/><circle cx="746.1" cy="826.4" r="4.4"/><circle cx="741.1" cy="837.5" r="4.5"/><circle cx="773.7" cy="801.3" r="4.5"/><circle cx="819" cy="892.7" r="4.6"/><circle cx="774.9" cy="902.8" r="1.3"/><circle cx="778.7" cy="905.4" r="1.6"/><circle cx="780.3" cy="910.3" r="1.9"/><circle cx="764.6" cy="909" r="2"/><circle cx="763.5" cy="903" r="2.3"/><circle cx="765.8" cy="895.7" r="3.7"/><circle cx="765.1" cy="916.6" r="3.9"/><circle cx="807.9" cy="880.3" r="2.3"/><circle cx="816" cy="874.6" r="2.7"/><circle cx="808.9" cy="873.6" r="2.8"/><circle cx="815" cy="886.5" r="2.8"/><circle cx="863.2" cy="847.3" r="1.4"/><circle cx="868.5" cy="848.6" r="1.6"/><circle cx="854.9" cy="842.3" r="2.3"/><circle cx="859.8" cy="833.3" r="2.5"/><circle cx="875.4" cy="841.3" r="3.1"/><circle cx="866.5" cy="827.2" r="4.8"/><circle cx="855.2" cy="853.8" r="5.6"/><circle cx="860.4" cy="874.1" r="1.4"/><circle cx="849.3" cy="868.1" r="2.2"/><circle cx="853.5" cy="863.5" r="2.3"/><circle cx="843.9" cy="871.8" r="2.7"/><circle cx="849.7" cy="886.1" r="3.6"/><circle cx="861.6" cy="861.7" r="4.3"/><circle cx="914.1" cy="886.4" r="1.3"/><circle cx="912.6" cy="871.5" r="1.4"/><circle cx="917.2" cy="871.4" r="1.4"/><circle cx="922" cy="878.6" r="1.4"/><circle cx="914.8" cy="867.2" r="1.7"/><circle cx="902.9" cy="874.8" r="1.7"/><circle cx="904.7" cy="886.4" r="1.8"/><circle cx="902.8" cy="869.5" r="2"/><circle cx="917.7" cy="893" r="2.2"/><circle cx="909.6" cy="865" r="2.3"/><circle cx="920.4" cy="866.5" r="2.3"/><circle cx="903.3" cy="863.2" r="2.6"/><circle cx="926.2" cy="862.5" r="3"/><circle cx="896.2" cy="870.5" r="3"/><circle cx="912.3" cy="897.8" r="3.3"/><circle cx="933.9" cy="874.4" r="3.7"/><circle cx="883.9" cy="959.9" r="2.7"/><circle cx="790.2" cy="956.9" r="1.7"/><circle cx="790.7" cy="951.1" r="2.4"/><circle cx="808.3" cy="972.8" r="2.5"/><circle cx="803" cy="978.1" r="2.6"/><circle cx="802.8" cy="950.8" r="2.7"/><circle cx="813.7" cy="965" r="2.9"/><circle cx="781.3" cy="965.3" r="3"/><circle cx="780" cy="972.9" r="3.1"/><circle cx="783.7" cy="947.6" r="3.7"/><circle cx="810.8" cy="980.4" r="3.8"/><circle cx="811" cy="952.8" r="4"/><circle cx="782.9" cy="981.3" r="4.2"/><circle cx="777.2" cy="957.4" r="4.3"/><circle cx="795.9" cy="944.4" r="4.3"/><circle cx="817.6" cy="973.2" r="4.4"/><circle cx="806.9" cy="942.2" r="5.2"/><circle cx="801.4" cy="987.6" r="5.3"/><circle cx="821.9" cy="957.7" r="6.3"/><circle cx="787.1" cy="993.6" r="7.2"/><circle cx="585.9" cy="901.1" r="1.7"/><circle cx="580.3" cy="909.9" r="1.7"/><circle cx="577.6" cy="905.6" r="1.7"/><circle cx="585.3" cy="910.5" r="1.7"/><circle cx="580.9" cy="900.6" r="1.7"/><circle cx="583.9" cy="896.5" r="1.7"/><circle cx="591" cy="901" r="1.7"/><circle cx="575.2" cy="910" r="1.7"/><circle cx="572.6" cy="904.7" r="1.7"/><circle cx="593.6" cy="906.3" r="1.7"/><circle cx="577.2" cy="914.8" r="1.7"/><circle cx="585" cy="919" r="1.9"/><circle cx="581.2" cy="892" r="1.9"/><circle cx="596.4" cy="901.6" r="2"/><circle cx="593.6" cy="914.7" r="2.1"/><circle cx="568.8" cy="900.8" r="2.1"/><circle cx="597.5" cy="910.3" r="2.1"/><circle cx="571.6" cy="915" r="2.1"/><circle cx="586.8" cy="890.9" r="2.1"/><circle cx="601.1" cy="905.3" r="2.4"/><circle cx="593" cy="890" r="2.4"/><circle cx="583.2" cy="924.7" r="2.4"/><circle cx="582.8" cy="886.1" r="2.4"/><circle cx="601" cy="897.5" r="2.5"/><circle cx="599.6" cy="916.2" r="2.5"/><circle cx="596.9" cy="922.4" r="2.6"/><circle cx="569.2" cy="888.6" r="2.6"/><circle cx="576.7" cy="926.7" r="2.7"/><circle cx="561.8" cy="899.7" r="2.7"/><circle cx="566.5" cy="920.6" r="2.7"/><circle cx="604.5" cy="911.2" r="2.7"/><circle cx="589.5" cy="883.9" r="2.9"/><circle cx="600" cy="890.5" r="2.9"/><circle cx="555.5" cy="903.9" r="3.1"/><circle cx="569.3" cy="927.7" r="3.2"/><circle cx="584.8" cy="931.9" r="3.2"/><circle cx="576.9" cy="934.4" r="3.3"/><circle cx="604.5" cy="921.8" r="3.3"/><circle cx="561.6" cy="889.4" r="3.4"/><circle cx="581.3" cy="878.8" r="3.4"/><circle cx="555.4" cy="895.2" r="3.4"/><circle cx="610.6" cy="916.1" r="3.4"/><circle cx="589.3" cy="875.9" r="3.5"/><circle cx="559.1" cy="917.9" r="3.5"/><circle cx="607.5" cy="893.5" r="3.5"/><circle cx="552.5" cy="912.3" r="3.5"/><circle cx="614.1" cy="899.1" r="3.5"/><circle cx="591.8" cy="936.6" r="3.5"/><circle cx="568.6" cy="936" r="3.5"/><circle cx="604.3" cy="930.4" r="3.6"/><circle cx="561.6" cy="880.7" r="3.6"/><circle cx="573.9" cy="874.2" r="3.7"/><circle cx="598.1" cy="874.6" r="3.7"/><circle cx="605.8" cy="884.6" r="3.7"/><circle cx="547.8" cy="899.9" r="3.8"/><circle cx="618.2" cy="911.5" r="3.8"/><circle cx="544.3" cy="908.5" r="3.8"/><circle cx="583.2" cy="940.5" r="3.8"/><circle cx="612.8" cy="924.8" r="3.9"/><circle cx="553.1" cy="886.5" r="3.9"/><circle cx="559.4" cy="935.6" r="3.9"/><circle cx="582.5" cy="869.9" r="3.9"/><circle cx="607.3" cy="875.3" r="3.9"/><circle cx="552" cy="923.7" r="4"/><circle cx="591.2" cy="945.8" r="4"/><circle cx="621.8" cy="893.6" r="4"/><circle cx="600.7" cy="939.2" r="4.1"/><circle cx="574.2" cy="864.7" r="4.1"/><circle cx="612.8" cy="934.6" r="4.1"/><circle cx="564.7" cy="871.8" r="4.2"/><circle cx="592.3" cy="867" r="4.2"/><circle cx="621.6" cy="920.7" r="4.3"/><circle cx="544.2" cy="890.9" r="4.3"/><circle cx="584.7" cy="860.2" r="4.3"/><circle cx="616.9" cy="878.3" r="4.3"/><circle cx="564.5" cy="861.4" r="4.5"/><circle cx="554.8" cy="866.4" r="4.6"/><circle cx="603.1" cy="865.7" r="4.8"/><circle cx="596" cy="856.8" r="4.9"/><circle cx="626.4" cy="883.9" r="5"/><circle cx="642.1" cy="1007.1" r="1"/><circle cx="642.6" cy="1010.9" r="1.1"/><circle cx="645.9" cy="1014" r="1.7"/><circle cx="638.2" cy="1009.3" r="1.8"/><circle cx="652.8" cy="1007.6" r="2.1"/><circle cx="636.4" cy="1004" r="2.1"/><circle cx="652.8" cy="1001.6" r="2.2"/><circle cx="640.4" cy="1015.6" r="2.4"/><circle cx="651.8" cy="1014.8" r="2.7"/><circle cx="658.2" cy="1011.5" r="2.8"/><circle cx="645.7" cy="1020.6" r="3.3"/><circle cx="655.3" cy="1023.6" r="5.1"/><circle cx="743.4" cy="1109.1" r="1.3"/><circle cx="738.6" cy="1113.5" r="1.3"/><circle cx="730.7" cy="1113.7" r="1.5"/><circle cx="725.7" cy="1103.2" r="1.5"/><circle cx="725.8" cy="1098.3" r="1.7"/><circle cx="743.4" cy="1113.8" r="1.8"/><circle cx="725.7" cy="1114.6" r="1.8"/><circle cx="735" cy="1116.8" r="1.9"/><circle cx="729.7" cy="1119" r="2.2"/><circle cx="747.6" cy="1105.8" r="2.4"/><circle cx="720.9" cy="1106.3" r="2.5"/><circle cx="727.9" cy="1092.8" r="2.5"/><circle cx="740.7" cy="1119.3" r="2.6"/><circle cx="745.5" cy="1092.7" r="2.6"/><circle cx="719.4" cy="1099.1" r="3.1"/><circle cx="722.6" cy="1120.7" r="3.3"/><circle cx="733.2" cy="1087" r="3.6"/><circle cx="734.8" cy="1125.1" r="4"/><circle cx="757.9" cy="1105.9" r="5.9"/><circle cx="710.2" cy="1105.2" r="6.1"/><circle cx="915.3" cy="1049.6" r="1.3"/><circle cx="914.2" cy="1043.4" r="1.3"/><circle cx="905.3" cy="1067.4" r="1.3"/><circle cx="914.4" cy="1059.9" r="1.4"/><circle cx="907.6" cy="1029.4" r="1.5"/><circle cx="870.3" cy="1051.3" r="1.6"/><circle cx="872" cy="1058.4" r="1.6"/><circle cx="903.8" cy="1071.8" r="1.6"/><circle cx="909.3" cy="1069.7" r="1.6"/><circle cx="905.5" cy="1025" r="1.7"/><circle cx="912.4" cy="1028.7" r="1.7"/><circle cx="867.2" cy="1047.3" r="1.8"/><circle cx="920.9" cy="1049.9" r="1.8"/><circle cx="879.5" cy="1022.8" r="1.9"/><circle cx="895.3" cy="1078.2" r="2"/><circle cx="920" cy="1063.3" r="2"/><circle cx="902.5" cy="1020.6" r="2"/><circle cx="872.1" cy="1028.1" r="2"/><circle cx="868.1" cy="1034.5" r="2.1"/><circle cx="910.7" cy="1023.4" r="2.1"/><circle cx="864.6" cy="1042.3" r="2.1"/><circle cx="871.4" cy="1069" r="2.2"/><circle cx="923.3" cy="1036.8" r="2.2"/><circle cx="863.7" cy="1051.7" r="2.2"/><circle cx="865.8" cy="1061" r="2.2"/><circle cx="918.1" cy="1029" r="2.2"/><circle cx="881.7" cy="1017.4" r="2.3"/><circle cx="889.3" cy="1016.5" r="2.3"/><circle cx="900" cy="1082.1" r="2.4"/><circle cx="890.7" cy="1082.2" r="2.5"/><circle cx="881.5" cy="1080.3" r="2.5"/><circle cx="865.8" cy="1028.7" r="2.5"/><circle cx="908" cy="1017.6" r="2.6"/><circle cx="928.3" cy="1051" r="2.6"/><circle cx="862.1" cy="1036.4" r="2.6"/><circle cx="872.5" cy="1075.5" r="2.7"/><circle cx="873.3" cy="1021.8" r="2.7"/><circle cx="859.6" cy="1046.5" r="2.7"/><circle cx="917.2" cy="1022.4" r="2.7"/><circle cx="928.8" cy="1040.5" r="2.8"/><circle cx="864.8" cy="1067.7" r="2.8"/><circle cx="860" cy="1057.5" r="2.9"/><circle cx="908.2" cy="1081.1" r="2.9"/><circle cx="924.8" cy="1030.1" r="2.9"/><circle cx="885" cy="1086.9" r="3.2"/><circle cx="895.4" cy="1087.9" r="3.3"/><circle cx="904.5" cy="1088.3" r="3.5"/><circle cx="874.3" cy="1083.2" r="3.6"/><circle cx="874.9" cy="1014" r="3.6"/><circle cx="865.1" cy="1020.6" r="3.9"/><circle cx="853.1" cy="1052.1" r="4.2"/><circle cx="856.3" cy="1065.4" r="4.2"/><circle cx="889.3" cy="1096.3" r="5.5"/><circle cx="903.1" cy="1100.6" r="7.3"/><circle cx="839.9" cy="1023.6" r="1.6"/><circle cx="833.2" cy="1029.7" r="1.6"/><circle cx="837.7" cy="1033.4" r="2.4"/><circle cx="827.6" cy="1028" r="2.6"/><circle cx="845.7" cy="1025" r="2.7"/><circle cx="826.5" cy="1020.7" r="3.1"/><circle cx="830.4" cy="1036" r="3.6"/><circle cx="821.5" cy="1088.6" r="1.3"/><circle cx="809.6" cy="1062.3" r="1.4"/><circle cx="816.6" cy="1060.2" r="1.4"/><circle cx="814.4" cy="1091.4" r="1.8"/><circle cx="830.2" cy="1070.2" r="1.8"/><circle cx="833.4" cy="1074.5" r="1.9"/><circle cx="826.5" cy="1089.8" r="2.1"/><circle cx="812" cy="1057.6" r="2.1"/><circle cx="819.6" cy="1093.4" r="2.2"/><circle cx="831.6" cy="1064.6" r="2.2"/><circle cx="821.1" cy="1057.3" r="2.3"/><circle cx="810.1" cy="1095.4" r="2.4"/><circle cx="800.6" cy="1092.1" r="2.9"/><circle cx="825.7" cy="1096.6" r="3"/><circle cx="833.2" cy="1091.2" r="3.1"/><circle cx="827.8" cy="1051" r="5.3"/><circle cx="852.8" cy="1144.1" r="1.1"/><circle cx="847.2" cy="1132.5" r="1.1"/><circle cx="848.9" cy="1144.8" r="1.1"/><circle cx="849.1" cy="1129" r="1.2"/><circle cx="856.3" cy="1139.6" r="1.2"/><circle cx="843.6" cy="1136.9" r="1.2"/><circle cx="841.9" cy="1140.9" r="1.4"/><circle cx="843" cy="1132.6" r="1.4"/><circle cx="857" cy="1143.9" r="1.4"/><circle cx="845.2" cy="1146.9" r="1.5"/><circle cx="855.3" cy="1129.7" r="1.7"/><circle cx="851.7" cy="1148.4" r="1.7"/><circle cx="838.9" cy="1137" r="1.8"/><circle cx="860.1" cy="1131.5" r="1.8"/><circle cx="856.9" cy="1148.9" r="1.8"/><circle cx="861.2" cy="1140.1" r="1.9"/><circle cx="844.4" cy="1127.8" r="1.9"/><circle cx="861.7" cy="1145.7" r="2"/><circle cx="837.9" cy="1131.6" r="2.1"/><circle cx="852.3" cy="1124.9" r="2.3"/><circle cx="847.2" cy="1152" r="2.3"/><circle cx="835.8" cy="1142" r="2.4"/><circle cx="864.6" cy="1135.2" r="2.4"/><circle cx="838.8" cy="1125.2" r="2.6"/><circle cx="846.4" cy="1121.9" r="2.6"/><circle cx="840.5" cy="1151.6" r="2.7"/><circle cx="859.6" cy="1125.1" r="2.9"/><circle cx="853.8" cy="1154.6" r="3"/><circle cx="855.5" cy="1118.7" r="3"/><circle cx="832.3" cy="1135.7" r="3.1"/><circle cx="867.6" cy="1142.2" r="3.2"/><circle cx="872" cy="1135.4" r="3.2"/><circle cx="833.3" cy="1148.9" r="3.3"/><circle cx="867.1" cy="1128.1" r="3.5"/><circle cx="860.3" cy="1159.6" r="3.5"/><circle cx="843.9" cy="1158.9" r="3.6"/><circle cx="851.9" cy="1162.7" r="3.6"/><circle cx="870.4" cy="1150.6" r="3.9"/><circle cx="826.9" cy="1142.6" r="4"/><circle cx="876.2" cy="1127.6" r="4"/><circle cx="865.7" cy="1119" r="4"/><circle cx="834.5" cy="1157.9" r="4.2"/><circle cx="822.9" cy="1133.2" r="4.6"/><circle cx="1040.4" cy="991.3" r="1.3"/><circle cx="1057.9" cy="1010.3" r="1.5"/><circle cx="1050.3" cy="983.8" r="1.5"/><circle cx="1063.2" cy="1004.9" r="1.6"/><circle cx="1035.8" cy="991" r="1.6"/><circle cx="1033.7" cy="1003.4" r="1.8"/><circle cx="1067" cy="996.3" r="1.8"/><circle cx="1036.7" cy="985.8" r="1.9"/><circle cx="1054.5" cy="980.9" r="2"/><circle cx="1063" cy="1010.2" r="2"/><circle cx="1030.7" cy="998.7" r="2"/><circle cx="1032.2" cy="1008.8" r="2.1"/><circle cx="1066.2" cy="988.1" r="2.1"/><circle cx="1042.5" cy="1018.2" r="2.1"/><circle cx="1030.5" cy="992.7" r="2.1"/><circle cx="1054.7" cy="1020.3" r="2.2"/><circle cx="1062.9" cy="1016.1" r="2.2"/><circle cx="1071" cy="991.9" r="2.4"/><circle cx="1025.1" cy="996" r="2.5"/><circle cx="1030.6" cy="986.3" r="2.5"/><circle cx="1027.6" cy="1004.3" r="2.6"/><circle cx="1066.8" cy="981.6" r="2.7"/><circle cx="1069.5" cy="1015" r="2.8"/><circle cx="1074.7" cy="1005" r="2.8"/><circle cx="1077.6" cy="994.5" r="2.9"/><circle cx="1058.9" cy="972.6" r="3.1"/><circle cx="1023.5" cy="988.7" r="3.2"/><circle cx="1047.3" cy="969.4" r="3.4"/><circle cx="1067.2" cy="973.7" r="3.5"/><circle cx="1077.3" cy="1012.7" r="3.6"/><circle cx="1069.5" cy="1023.1" r="3.6"/><circle cx="1082.1" cy="1001.5" r="3.6"/><circle cx="1082.2" cy="987.3" r="3.9"/><circle cx="1015.8" cy="993.8" r="4.3"/><circle cx="1065.8" cy="963.7" r="4.9"/><circle cx="1061.5" cy="949.8" r="8"/><circle cx="1088.3" cy="1039.1" r="1.6"/><circle cx="339.7" cy="520.5" r="5.7"/><circle cx="380" cy="596" r="7.2"/><circle cx="365.8" cy="599" r="5.2"/><circle cx="255" cy="481.3" r="3.1"/><circle cx="248.2" cy="477.5" r="2.6"/><circle cx="264.2" cy="475.4" r="1.6"/><circle cx="255" cy="466.6" r="1.6"/><circle cx="305.1" cy="452.2" r="1.9"/><circle cx="305.1" cy="456.6" r="1.9"/><circle cx="436.6" cy="446.4" r="8.7"/><circle cx="453.5" cy="440.5" r="6.7"/><circle cx="438" cy="467.4" r="6.2"/><circle cx="408.8" cy="474" r="4.7"/><circle cx="418.9" cy="479" r="4.2"/><circle cx="429" cy="475" r="4.2"/><circle cx="410.5" cy="454.8" r="3.6"/><circle cx="485" cy="430.6" r="7.7"/><circle cx="557.4" cy="469" r="4.7"/><circle cx="533" cy="480" r="4.2"/><circle cx="540" cy="473.5" r="3.6"/><circle cx="558" cy="496" r="3.6"/><circle cx="456.3" cy="502" r="7.2"/><circle cx="519.5" cy="541" r="3.1"/><circle cx="527.5" cy="543" r="1.6"/><circle cx="485" cy="545" r="7.2"/><circle cx="504" cy="522" r="2.1"/><circle cx="548" cy="581.8" r="6.7"/><circle cx="554" cy="606.4" r="5.2"/><circle cx="538.5" cy="622" r="4.7"/><circle cx="519.5" cy="618" r="4.2"/><circle cx="529.4" cy="584" r="3.1"/><circle cx="410" cy="646.4" r="11.7"/><circle cx="426.5" cy="637" r="5.7"/><circle cx="435.9" cy="645" r="3.1"/><circle cx="449.4" cy="646.4" r="3.1"/><circle cx="455.5" cy="642.7" r="3.1"/><circle cx="453" cy="653.2" r="2.1"/><circle cx="463" cy="652.5" r="2.1"/><circle cx="511.3" cy="661" r="4.7"/><circle cx="512" cy="671.4" r="4.7"/><circle cx="511.3" cy="680.8" r="4.2"/><circle cx="496.8" cy="665.5" r="2.6"/><circle cx="444.5" cy="693.8" r="3.6"/><circle cx="475" cy="700.4" r="2.6"/><circle cx="482.6" cy="699" r="2.6"/><circle cx="485" cy="707.3" r="3.1"/><circle cx="392.4" cy="681.5" r="3.6"/><circle cx="390" cy="688" r="2.1"/><circle cx="374.4" cy="714" r="7.2"/><circle cx="388" cy="721.3" r="6.7"/><circle cx="566" cy="782" r="4.7"/><circle cx="583" cy="805" r="3.1"/><circle cx="587" cy="820.4" r="3.6"/><circle cx="695" cy="688.6" r="7.2"/><circle cx="786.5" cy="657.7" r="5.2"/><circle cx="795" cy="666" r="5.2"/><circle cx="733" cy="695.5" r="4.2"/><circle cx="883" cy="670" r="4.2"/><circle cx="777.5" cy="747" r="2.6"/><circle cx="773" cy="770" r="2.6"/><circle cx="768" cy="793" r="2.6"/><circle cx="746" cy="803" r="6.2"/><circle cx="756.4" cy="813.4" r="5.2"/><circle cx="849" cy="813" r="4.2"/><circle cx="833" cy="791" r="3.6"/><circle cx="679" cy="815" r="3.6"/><circle cx="849" cy="946.7" r="17.8"/><circle cx="864" cy="925" r="6.2"/><circle cx="888" cy="925" r="6.2"/><circle cx="898" cy="941" r="6.2"/><circle cx="576.4" cy="843" r="8.2"/><circle cx="627" cy="860" r="7.2"/><circle cx="643.5" cy="889.5" r="7.2"/><circle cx="644.4" cy="906" r="7.2"/><circle cx="568.6" cy="974.7" r="13.7"/><circle cx="594" cy="958" r="4.7"/><circle cx="693.5" cy="1023.5" r="4.2"/><circle cx="684" cy="1026.5" r="3.6"/><circle cx="658.8" cy="1037" r="4.7"/><circle cx="660.8" cy="1091" r="5.2"/><circle cx="733" cy="1058.4" r="7.7"/><circle cx="748.6" cy="1054" r="5.7"/><circle cx="754.8" cy="1065" r="4.2"/><circle cx="907" cy="1002.6" r="8.2"/><circle cx="938.5" cy="1034.6" r="5.7"/><circle cx="929" cy="1081" r="4.7"/><circle cx="791.3" cy="1079" r="7.2"/><circle cx="1092.5" cy="945.4" r="4.2"/><circle cx="1090" cy="937" r="2.1"/><circle cx="1079.5" cy="936.5" r="2.1"/><circle cx="1118" cy="972" r="5.7"/><circle cx="1100.6" cy="963" r="3.1"/><circle cx="1112.8" cy="991" r="8.2"/><circle cx="1123.6" cy="1002.5" r="5.2"/><circle cx="1006" cy="973" r="6.2"/><circle cx="999.7" cy="1002.8" r="6.7"/><circle cx="1010.5" cy="1032" r="7.7"/><circle cx="1090.6" cy="971.8" r="6.2"/><circle cx="1015.4" cy="961.5" r="6.2"/><circle cx="1051" cy="1039" r="4.7"/><circle cx="1088.5" cy="1032" r="2.6"/></g>
<g fill="#fdd27a" stroke="#f4df6e" stroke-width="1.2"><circle cx="632.5" cy="725.9" r="3.5"/><circle cx="632.1" cy="717.8" r="3.6"/><circle cx="648" cy="750.5" r="5.2"/><circle cx="841.7" cy="747.8" r="4.4"/><circle cx="833.5" cy="722.6" r="5.3"/><circle cx="866.7" cy="712" r="6"/><circle cx="906.2" cy="810" r="2"/><circle cx="898.8" cy="788.6" r="2.6"/><circle cx="891.8" cy="794.5" r="2.7"/><circle cx="917.2" cy="775.6" r="3.7"/><circle cx="884.6" cy="788.7" r="4.2"/><circle cx="884.3" cy="778.7" r="4.8"/><circle cx="773.5" cy="824.4" r="2"/><circle cx="922" cy="871.9" r="2"/><circle cx="924" cy="894.6" r="2.9"/><circle cx="908.6" cy="857.8" r="3.7"/><circle cx="932.1" cy="895.5" r="4.3"/><circle cx="886.5" cy="874.3" r="6"/><circle cx="582.3" cy="914.5" r="2"/><circle cx="566.7" cy="894.9" r="2.8"/><circle cx="560.9" cy="926.5" r="4"/><circle cx="659.8" cy="1003.7" r="3.8"/><circle cx="888.3" cy="1071.1" r="1.8"/><circle cx="1072.2" cy="998.8" r="2.6"/><circle cx="1060.4" cy="979.6" r="2.7"/><circle cx="1052.2" cy="975.2" r="2.8"/><circle cx="1031.7" cy="1015.1" r="3"/><circle cx="291.6" cy="528" r="11.5"/><circle cx="327.6" cy="515" r="7.5"/><circle cx="353" cy="538" r="4.5"/><circle cx="406" cy="515.5" r="5"/><circle cx="407" cy="526.5" r="4.5"/><circle cx="319.5" cy="607.5" r="9"/><circle cx="319.5" cy="591.5" r="7"/><circle cx="329" cy="583.5" r="4.5"/><circle cx="338" cy="601" r="3"/><circle cx="374" cy="569" r="3.5"/><circle cx="355.7" cy="594" r="4.5"/><circle cx="265.9" cy="484.2" r="5.5"/><circle cx="412" cy="434.6" r="10.5"/><circle cx="521.6" cy="422.8" r="11"/><circle cx="604.8" cy="478.4" r="8"/><circle cx="622" cy="476.3" r="6.5"/><circle cx="636.4" cy="481" r="6"/><circle cx="650" cy="505" r="6"/><circle cx="648" cy="518.6" r="6"/><circle cx="614.3" cy="531.7" r="5"/><circle cx="564.4" cy="534.4" r="9.5"/><circle cx="456" cy="527" r="5"/><circle cx="443.7" cy="632.8" r="4.5"/><circle cx="405" cy="716" r="9.5"/><circle cx="582" cy="683" r="11.5"/><circle cx="605.5" cy="678" r="10.5"/><circle cx="578" cy="767.3" r="5.5"/><circle cx="596.4" cy="782.8" r="5.5"/><circle cx="621.5" cy="786" r="5.5"/><circle cx="609.7" cy="776" r="3"/><circle cx="646" cy="711.5" r="4.5"/><circle cx="556" cy="706.6" r="4"/><circle cx="711.6" cy="698" r="9"/><circle cx="762" cy="661" r="6.5"/><circle cx="774.5" cy="656" r="5"/><circle cx="796" cy="676.6" r="4"/><circle cx="877.7" cy="746" r="7.5"/><circle cx="863" cy="756.6" r="7.5"/><circle cx="755.5" cy="767.8" r="6.5"/><circle cx="859.6" cy="800.5" r="7.5"/><circle cx="839" cy="811.7" r="5.5"/><circle cx="913" cy="762.6" r="7.5"/><circle cx="944.5" cy="798" r="4"/><circle cx="935" cy="825" r="4"/><circle cx="903" cy="829" r="3.5"/><circle cx="912" cy="830" r="3"/><circle cx="921" cy="829" r="3"/><circle cx="898" cy="826" r="3"/><circle cx="670.8" cy="832" r="7.5"/><circle cx="829" cy="872" r="6.5"/><circle cx="766" cy="815" r="3"/><circle cx="761" cy="822" r="3"/><circle cx="757" cy="830" r="3"/><circle cx="760" cy="883" r="3.5"/><circle cx="779" cy="893" r="4"/><circle cx="754" cy="864" r="3"/><circle cx="905" cy="908" r="7.5"/><circle cx="894.5" cy="851" r="5.5"/><circle cx="886.8" cy="861.5" r="5.5"/><circle cx="557.5" cy="846.5" r="9.5"/><circle cx="636.6" cy="874" r="7.5"/><circle cx="640" cy="922" r="7.5"/><circle cx="608" cy="954" r="6.5"/><circle cx="520" cy="918" r="10.5"/><circle cx="598.8" cy="980" r="15"/><circle cx="545.4" cy="876.6" r="4.5"/><circle cx="536" cy="899" r="4.5"/><circle cx="538.5" cy="923" r="5"/><circle cx="545" cy="935" r="5"/><circle cx="566" cy="949.7" r="5.5"/><circle cx="580" cy="955" r="5.5"/><circle cx="630.6" cy="906" r="4"/><circle cx="632" cy="1015" r="5"/><circle cx="644.5" cy="998" r="3.5"/><circle cx="701.5" cy="1015.5" r="5.5"/><circle cx="694" cy="1066" r="6"/><circle cx="753.4" cy="1083.8" r="5.5"/><circle cx="750" cy="1116.8" r="4"/><circle cx="888" cy="999.6" r="9"/><circle cx="921" cy="1011" r="8"/><circle cx="940.6" cy="1059.4" r="6"/><circle cx="936.5" cy="1071.8" r="5.5"/><circle cx="859" cy="1030" r="3.5"/><circle cx="854" cy="1037" r="3.5"/><circle cx="898" cy="1013" r="3.5"/><circle cx="916" cy="1081" r="3"/><circle cx="930" cy="1062" r="2.5"/><circle cx="817.8" cy="1013" r="7"/><circle cx="840.5" cy="1005.7" r="5"/><circle cx="848.7" cy="1014" r="5"/><circle cx="803" cy="1050" r="7"/><circle cx="816.7" cy="1046" r="6"/><circle cx="839.4" cy="1082" r="4"/><circle cx="827.7" cy="1116" r="7.5"/><circle cx="840.9" cy="1108" r="6.5"/><circle cx="855" cy="1106" r="6"/><circle cx="883.8" cy="1138" r="5"/><circle cx="998.4" cy="879" r="7"/><circle cx="1012" cy="881.7" r="6.5"/><circle cx="1032" cy="917.5" r="7"/><circle cx="1048.7" cy="917" r="8.5"/><circle cx="1068.4" cy="907" r="3"/><circle cx="1106.7" cy="1021" r="11"/><circle cx="1080.9" cy="961" r="6"/><circle cx="1094.5" cy="985" r="6"/><circle cx="1002.9" cy="1017.7" r="6.5"/><circle cx="1015" cy="1012.6" r="4.5"/><circle cx="1021" cy="1022.8" r="4.5"/><circle cx="1039.5" cy="1036" r="5"/><circle cx="1075" cy="1032" r="6"/><circle cx="1028" cy="955.6" r="5"/><circle cx="1047" cy="1029" r="3.5"/><circle cx="1034" cy="976" r="3"/><circle cx="1040" cy="970" r="3"/></g>
<g fill="#e4956e" stroke="#f4df6e" stroke-width="1.2"><circle cx="629" cy="681" r="10.5"/><circle cx="585.8" cy="776" r="5.5"/><circle cx="688.4" cy="661" r="5.5"/><circle cx="753.8" cy="678" r="7.5"/><circle cx="766.7" cy="779" r="7.5"/><circle cx="928.5" cy="767" r="6.5"/><circle cx="707" cy="824.5" r="11"/><circle cx="834" cy="860" r="6.5"/><circle cx="827" cy="914" r="6"/><circle cx="756" cy="907.7" r="5.5"/><circle cx="892" cy="900" r="6.5"/><circle cx="938" cy="886.5" r="4"/><circle cx="917" cy="845" r="4.5"/><circle cx="928" cy="847.8" r="4.5"/><circle cx="620.8" cy="947" r="6.5"/><circle cx="540" cy="859.4" r="9.5"/><circle cx="527" cy="875.7" r="9.5"/><circle cx="520" cy="896" r="10"/><circle cx="527" cy="940" r="11"/><circle cx="931" cy="1022" r="6.5"/><circle cx="941.6" cy="1046.6" r="6"/><circle cx="859" cy="1081" r="4"/><circle cx="829.5" cy="1004.7" r="5.5"/><circle cx="794.6" cy="1062.5" r="7.5"/><circle cx="1057.2" cy="877.2" r="13"/><circle cx="1034.4" cy="873.5" r="7"/><circle cx="1024" cy="972" r="4.5"/><circle cx="1078.4" cy="976.4" r="4"/><circle cx="1042.6" cy="950.5" r="4.5"/></g>
<g fill="#d35c60" stroke="#f0cf6e" stroke-width="1"><circle cx="497" cy="588" r="9.6"/><circle cx="480.5" cy="601.8" r="9.6"/><circle cx="551" cy="757" r="14.6"/><circle cx="656" cy="767" r="5.6"/><circle cx="759" cy="693" r="7.6"/><circle cx="808" cy="767.8" r="10.6"/><circle cx="820.6" cy="782.4" r="7.6"/><circle cx="796.8" cy="800.5" r="8.1"/><circle cx="812.3" cy="809" r="7.1"/><circle cx="937" cy="777" r="4.1"/><circle cx="688" cy="838" r="8.6"/><circle cx="835" cy="846" r="6.6"/><circle cx="884" cy="887" r="6.1"/><circle cx="921" cy="910.6" r="6.6"/><circle cx="941" cy="865" r="4.6"/><circle cx="596" cy="842" r="8.6"/><circle cx="631.8" cy="936.5" r="6.6"/><circle cx="543.7" cy="960" r="12.6"/><circle cx="677" cy="1079.7" r="13.1"/><circle cx="1022" cy="1044" r="7.1"/><circle cx="1038.5" cy="1051" r="8.1"/></g>
<g fill="#c4c4c8"><circle cx="519" cy="514.4" r="3.5"/></g>
<g font-family="'Liberation Sans',sans-serif" fill="#000">
<text x="262.7" y="439.5" font-size="24.5" font-style="italic" textLength="44.3" lengthAdjust="spacingAndGlyphs">rpm</text>
<text x="203.7" y="473.9" font-size="24.5" font-style="italic" textLength="114.3" lengthAdjust="spacingAndGlyphs">site_scons</text>
<text x="388" y="442.5" font-size="24.5" font-style="italic" textLength="51.7" lengthAdjust="spacingAndGlyphs">bson</text>
<text x="458" y="399.7" font-size="24.5" font-style="italic" textLength="82.5" lengthAdjust="spacingAndGlyphs">dbtests</text>
<text x="557.7" y="425.5" font-size="24.5" font-style="italic" textLength="59" lengthAdjust="spacingAndGlyphs">client</text>
<text x="487.6" y="467.8" font-size="24.5" font-style="italic" textLength="36.9" lengthAdjust="spacingAndGlyphs">rpc</text>
<text x="418.8" y="494.8" font-size="24.5" font-style="italic" textLength="93.4" lengthAdjust="spacingAndGlyphs">platform</text>
<text x="595.8" y="504.7" font-size="24.5" font-style="italic" textLength="49.2" lengthAdjust="spacingAndGlyphs">shell</text>
<text x="400.3" y="542.2" font-size="24.5" font-style="italic" textLength="100.7" lengthAdjust="spacingAndGlyphs">transport</text>
<text x="341.3" y="553.2" font-size="24.5" font-style="italic" textLength="9.1" lengthAdjust="spacingAndGlyphs">s</text>
<text x="543" y="568.6" font-size="24.5" font-style="italic" textLength="94.6" lengthAdjust="spacingAndGlyphs">scripting</text>
<text x="492.3" y="602" font-size="24.5" font-style="italic" textLength="96.1" lengthAdjust="spacingAndGlyphs">executor</text>
<text x="425.2" y="684.9" font-size="24.5" font-style="italic" textLength="32.8" lengthAdjust="spacingAndGlyphs">util</text>
<text x="569.8" y="749.6" font-size="24.5" font-style="italic" textLength="85.6" lengthAdjust="spacingAndGlyphs">pipeline</text>
<text x="703.8" y="679" font-size="24.5" font-style="italic" textLength="82.4" lengthAdjust="spacingAndGlyphs">storage</text>
<text x="693.8" y="781.6" font-size="24.5" font-style="italic" textLength="56.4" lengthAdjust="spacingAndGlyphs">index</text>
<text x="632.2" y="829" font-size="24.5" font-style="italic" textLength="122" lengthAdjust="spacingAndGlyphs">transaction</text>
<text x="705.1" y="860.6" font-size="24.5" font-style="italic" textLength="51.7" lengthAdjust="spacingAndGlyphs">stats</text>
<text x="669.2" y="889" font-size="24.5" font-style="italic" textLength="48.4" lengthAdjust="spacingAndGlyphs">auth</text>
<text x="560" y="916.7" font-size="24.5" font-style="italic" textLength="40.6" lengthAdjust="spacingAndGlyphs">repl</text>
<text x="815.8" y="711.4" font-size="24.5" font-style="italic" textLength="92.9" lengthAdjust="spacingAndGlyphs">matcher</text>
<text x="852" y="796.6" font-size="24.5" font-style="italic" textLength="120.4" lengthAdjust="spacingAndGlyphs">commands</text>
<text x="784.8" y="831.8" font-size="20.5" textLength="92.9" lengthAdjust="spacingAndGlyphs">curop.cpp</text>
<text x="825.7" y="856.7" font-size="24.5" font-style="italic" textLength="26.7" lengthAdjust="spacingAndGlyphs">db</text>
<text x="874.7" y="880" font-size="24.5" font-style="italic" textLength="80.1" lengthAdjust="spacingAndGlyphs">catalog</text>
<text x="812" y="904.4" font-size="24.5" font-style="italic" textLength="37.8" lengthAdjust="spacingAndGlyphs">ops</text>
<text x="717.8" y="944" font-size="24.5" font-style="italic" textLength="27" lengthAdjust="spacingAndGlyphs">fts</text>
<text x="853.7" y="945" font-size="24.5" font-style="italic" textLength="32.3" lengthAdjust="spacingAndGlyphs">cst</text>
<text x="659.2" y="1062.7" font-size="24.5" font-style="italic" textLength="49.6" lengthAdjust="spacingAndGlyphs">exec</text>
<text x="870.4" y="1082.2" font-size="24.5" font-style="italic" textLength="9.7" lengthAdjust="spacingAndGlyphs">s</text>
<text x="1011.6" y="955.8" font-size="24.5" font-style="italic" textLength="62.5" lengthAdjust="spacingAndGlyphs">query</text>
</g>
</svg>
<svg class="abs" style="left:56px;top:132px;width:30px;height:30px" viewBox="0 0 30 30"><circle cx="15.3" cy="13.9" r="11.3" fill="none" stroke="#556283" stroke-width="2.1"/><circle cx="15.3" cy="8.8" r="1.8" fill="#556283"/><path d="M12.6 12.2 H16.3 V18.6 M12.4 18.8 H18.8" fill="none" stroke="#556283" stroke-width="2.2"/></svg>
<div class="abs legend"><i style="width:60px;background:repeating-linear-gradient(135deg,#cb8083 0 2.4px,#edd2d2 2.4px 5px)"></i><i style="width:59px;background:#d35c5e"></i><i style="width:59px;background:#e4956c"></i><i style="width:60px;background:#fdd278;margin-right:0"></i></div>
<div class="abs" id="ltxt" style="left:382px;top:134.5px;font-size:21px;line-height:26px;color:#3f4b65;letter-spacing:0.15px;font-size:22px">Technical debt friction</div>
<div class="abs" id="sys" style="left:59px;top:1363px;font-size:22px;line-height:28px;font-weight:bold;color:#3b8693">System</div>
<div class="abs" id="shw" style="right:741px;top:1365px;font-size:18px;line-height:24px;color:#5f6b86;letter-spacing:0.24px">Showing 3,669 files</div>

<!-- right column: peeking widgets behind dropdown -->
<div class="abs panel"></div>
<svg class="abs" style="left:1350px;top:400px;width:698px;height:280px" viewBox="1350 400 698 280">
<g fill="none" stroke-width="5.6">
<circle cx="2018" cy="428" r="9.5" stroke="#4a9b6e"/>
<circle cx="2018" cy="522.5" r="9.5" stroke="#7edbe0"/>
<circle cx="2018" cy="616.5" r="9.5" stroke="#2f7d7b"/>
<circle cx="1368.6" cy="617" r="9.5" stroke="#e0525e"/>
</g>
<path d="M1368.3 437 v11 q0 8 -6 8.5" fill="none" stroke="#e0525e" stroke-width="1.8"/>
<g font-family="'Liberation Sans',sans-serif" font-size="18" font-weight="bold">
<text x="2010" y="466" fill="#4a9b6e">9.0</text>
<text x="2013" y="560" fill="#3a4562">0</text>
<text x="2016" y="655" fill="#2f7d7b" textLength="25">0%</text>
<text x="1356.5" y="654.5" fill="#e0525e" font-size="17">0%</text>
</g>
</svg>

<!-- filter boxes -->
<div class="abs box" style="top:111px;height:73px"></div>
<svg class="abs" style="left:1388px;top:132px;width:34px;height:32px" viewBox="0 0 34 32"><path d="M2 3 H32 L20 16.5 V29.5 L14 26 V16.5 Z" fill="none" stroke="#5a6684" stroke-width="1.5" stroke-linejoin="miter"/></svg>
<div class="abs ph" id="f1" style="left:1452px;top:136px;letter-spacing:-0.1px">Filter by Issue ID</div>
<svg class="abs" style="left:1979px;top:143px;width:16px;height:10px" viewBox="0 0 16 10"><path d="M2 2 L8 8 L14 2" fill="none" stroke="#3a4562" stroke-width="1.3"/></svg>

<div class="abs box" style="top:202.8px;height:73px"></div>
<svg class="abs" style="left:1381px;top:222px;width:36px;height:36px" viewBox="0 0 36 36"><circle cx="16" cy="16" r="12.2" fill="none" stroke="#5a6684" stroke-width="1.5"/><path d="M24.6 24.6 L32 32" stroke="#5a6684" stroke-width="1.5"/></svg>
<div class="abs ph" id="f2" style="left:1446px;top:227px;letter-spacing:1.43px">Search by filename</div>

<div class="abs box" style="top:294px;height:73px;border:1.5px solid #86d9da"></div>
<svg class="abs" style="left:1390px;top:314px;width:34px;height:32px" viewBox="0 0 34 32"><path d="M2 3 H32 L20 16.5 V29.5 L14 26 V16.5 Z" fill="none" stroke="#5a6684" stroke-width="1.5"/></svg>
<div class="abs" style="left:1445.5px;top:318px;width:1.5px;height:26px;background:#222"></div>
<div class="abs ph" id="f3" style="left:1447px;top:318px;letter-spacing:1.47px">Filter by owners</div>
<svg class="abs" style="left:1979px;top:323px;width:22px;height:16px" viewBox="0 0 22 16"><path d="M3.5 3.5 L11 11 L18.5 3.5" fill="none" stroke="#444" stroke-width="3"/></svg>

<!-- dropdown -->
<div class="abs dd"></div>
<div class="abs" id="teams" style="left:1400px;top:414px;font-size:16px;line-height:20px;color:#999">TEAMS</div>
<div class="abs" style="left:1382px;top:439px;width:624px;height:76px;background:#f5f5f5;border-radius:9px"></div>
<div class="abs opt" id="o1" style="top:465px;letter-spacing:0.46px">Pipeline</div>
<div class="abs opt" id="o2" style="top:541px;letter-spacing:0.66px">Query</div>
<div class="abs opt" id="o3" style="top:617px;letter-spacing:0.64px">Repl/Catalog</div>
<div class="abs opt" id="o4" style="top:693px;letter-spacing:0.47px">Sharding</div>
<div class="abs opt" id="o5" style="top:770px;letter-spacing:0.61px">Transaction</div>

<!-- tabs below dropdown -->
<div class="abs" style="left:1370px;top:945px;width:647px;height:58px;background:#f9f9fc;border-top:1px solid #e9ebf3;border-radius:0 0 8px 8px"></div>
<div class="abs" style="left:1389px;top:873px;width:305px;height:73px;background:#f9f9fc;border:1px solid #ecedf4;border-bottom:none;border-radius:9px 9px 0 0"></div>
<div class="abs tab" id="t1" style="left:1503px;top:898px">Contents</div>
<div class="abs" style="left:1496px;top:944.5px;width:90px;height:2px;background:#5fcccc"></div>
<div class="abs tab" id="t2" style="left:1779px;top:898px;letter-spacing:-0.37px">Folder Summary</div>
<svg class="abs" style="left:1394px;top:962px;width:26px;height:24px" viewBox="0 0 26 24"><path d="M2.5 5 a2 2 0 0 1 2 -2 h5.5 l2.2 3 h9 a2 2 0 0 1 2 2 v12 a2 2 0 0 1 -2 2 h-16.7 a2 2 0 0 1 -2 -2 Z" fill="none" stroke="#3d8f99" stroke-width="1.3"/></svg>
<div class="abs" id="mongo" style="left:1434px;top:964px;font-size:18px;line-height:24px;color:#3a8a95;letter-spacing:0.68px">mongo</div>
</body>
</html>
